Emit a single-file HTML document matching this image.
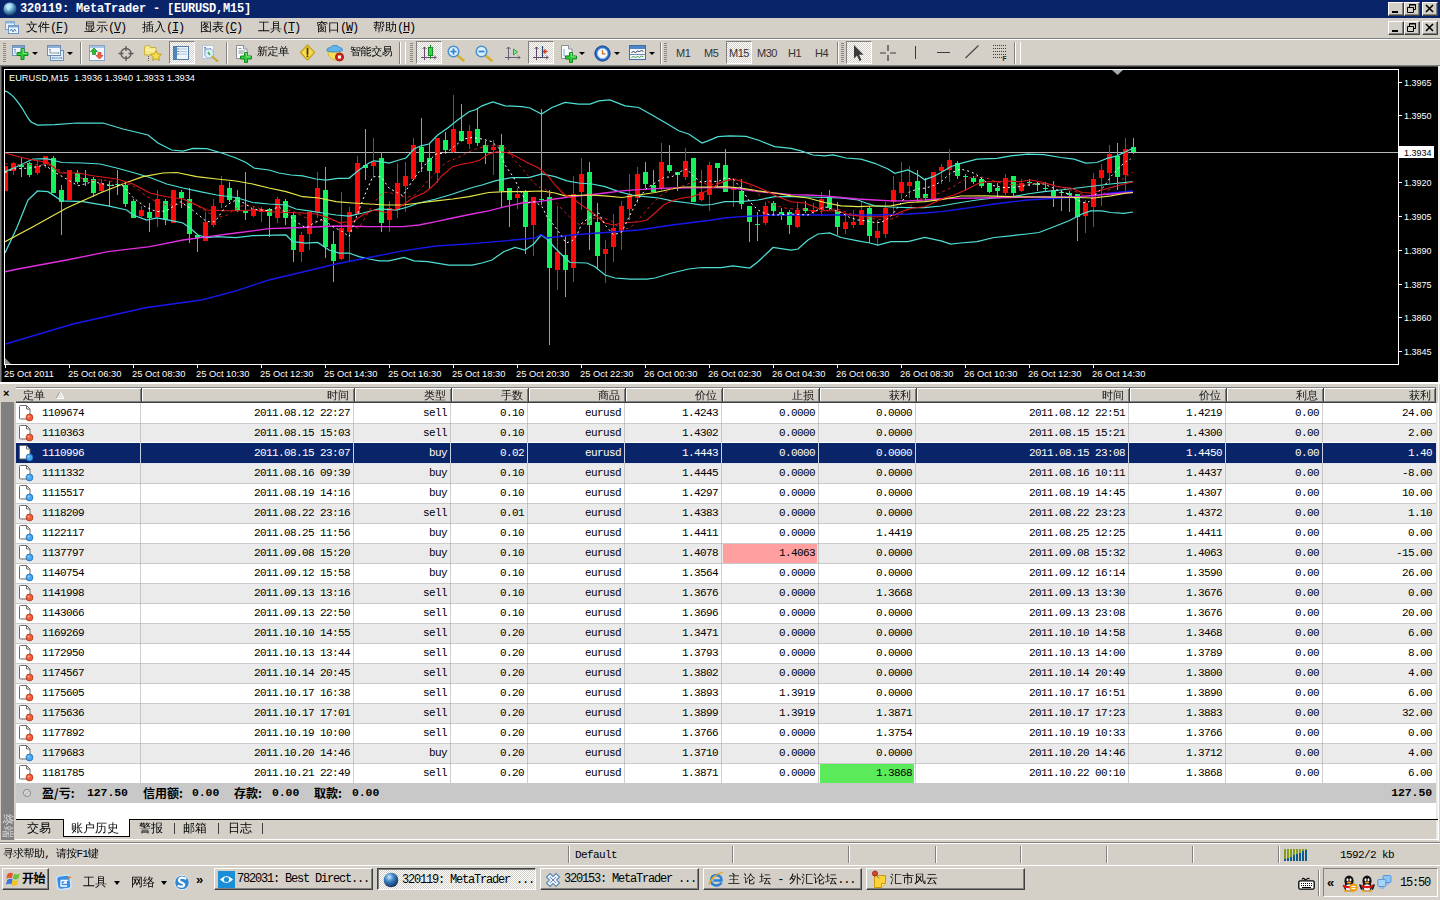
<!DOCTYPE html>
<html lang="zh"><head><meta charset="utf-8"><title>320119: MetaTrader - [EURUSD,M15]</title>
<style>
*{box-sizing:border-box;margin:0;padding:0}
html,body{width:1440px;height:900px;overflow:hidden;background:#d4d0c8}
body{position:relative;font-family:"Liberation Mono","WenQuanYi Zen Hei","Noto Sans CJK SC",monospace;font-size:12px;color:#000;line-height:1}
.a{position:absolute}
.m{font-family:"Liberation Mono","WenQuanYi Zen Hei","Noto Sans CJK SC",monospace;font-size:11px;line-height:11px;letter-spacing:-0.6px;white-space:pre}
.c{font-family:"Liberation Mono","WenQuanYi Zen Hei","Noto Sans CJK SC",monospace;font-size:12px;white-space:pre}
.s{font-family:"Liberation Sans",sans-serif;font-size:11px;white-space:pre}
#title{left:0;top:0;width:1440px;height:18px;background:#0a246a}
#title .t{left:20px;top:3px;color:#fff;font-weight:bold;font-size:12px;letter-spacing:-0.2px}
.wb{width:16px;height:14px;background:#d4d0c8;border:1px solid;border-color:#fff #404040 #404040 #fff;box-shadow:inset -1px -1px 0 #808080}
.wb svg{position:absolute;left:0;top:0}
#menu{left:0;top:18px;width:1440px;height:20px}
#menu .i{top:4px}
u{text-decoration:underline;text-underline-offset:1px}
.l{letter-spacing:-1.2px}
.grip{width:3px;height:20px;top:3px;background:repeating-linear-gradient(to bottom,#8a8780 0,#8a8780 1px,transparent 1px,transparent 2px)}
.sep{width:2px;height:22px;top:2px;border-left:1px solid #808080;border-right:1px solid #fff}
.pb{top:1px;height:23px;border:1px solid;border-color:#808080 #fff #fff #808080;background-color:#fff;background-image:linear-gradient(45deg,#d4d0c8 25%,transparent 25%,transparent 75%,#d4d0c8 75%),linear-gradient(45deg,#d4d0c8 25%,transparent 25%,transparent 75%,#d4d0c8 75%);background-size:2px 2px;background-position:0 0,1px 1px}
.ic{top:5px}
.dd{top:12px;width:0;height:0;border:3px solid transparent;border-top:3px solid #000;border-bottom:0}
.tt{font-family:"WenQuanYi Zen Hei","Noto Sans CJK SC",sans-serif;font-size:11px;letter-spacing:-0.4px;top:6px;white-space:pre}
.tf{font-family:"Liberation Sans",sans-serif;font-size:11px;top:8px;color:#333;white-space:pre;letter-spacing:-0.5px}
.hd{font-family:"WenQuanYi Zen Hei","Noto Sans CJK SC",sans-serif;font-size:11px;line-height:11px;white-space:pre;color:#111}
.row{left:16px;width:1420px;height:20px}
.row.sel{color:#fff}
.sm{font-family:"Liberation Mono","WenQuanYi Zen Hei",monospace;font-size:11.5px;line-height:12px;font-weight:bold;letter-spacing:-0.1px;white-space:pre}
.sm.k{font-family:"Noto Sans CJK SC","WenQuanYi Zen Hei",sans-serif;letter-spacing:0;font-size:12px;font-weight:700}
.tab{font-family:"WenQuanYi Zen Hei","Noto Sans CJK SC",sans-serif;font-size:12px;line-height:12px;white-space:pre}
.st{font-family:"Liberation Mono","WenQuanYi Zen Hei","Noto Sans CJK SC",monospace;font-size:11px;line-height:11px;white-space:pre;letter-spacing:-0.7px}
.sl{letter-spacing:-1px}
.sl2{font-family:"Liberation Mono",monospace;font-size:11px;line-height:11px;white-space:pre;letter-spacing:-0.6px}
.vs{top:846px;width:2px;height:17px;border-left:1px solid #808080;border-right:1px solid #fff}
.tbn{background:#d4d0c8;border:1px solid;border-color:#fff #404040 #404040 #fff;box-shadow:inset -1px -1px 0 #808080}
.tbn.on{border-color:#404040 #fff #fff #404040;box-shadow:inset 1px 1px 0 #808080;background-color:#fff;background-image:linear-gradient(45deg,#d4d0c8 25%,transparent 25%,transparent 75%,#d4d0c8 75%),linear-gradient(45deg,#d4d0c8 25%,transparent 25%,transparent 75%,#d4d0c8 75%);background-size:2px 2px;background-position:0 0,1px 1px}
.cj{font-size:12px;letter-spacing:0;font-family:"WenQuanYi Zen Hei","Noto Sans CJK SC",sans-serif}
.m12{font-size:12px;line-height:12px;letter-spacing:-1.2px}

</style></head>
<body>
<!-- TITLE BAR -->
<div id="title" class="a">
 <svg class="a" style="left:2px;top:1px" width="16" height="16" viewBox="0 0 16 16"><defs><radialGradient id="gl" cx="0.4" cy="0.3" r="0.7"><stop offset="0" stop-color="#d8f4ff"/><stop offset="0.45" stop-color="#6fb4d8"/><stop offset="1" stop-color="#123a6a"/></radialGradient></defs><circle cx="8" cy="8" r="6.6" fill="url(#gl)"/><path d="M4 5q2-3 5-2q2 2 0 4q-2 1-2 3q-3-1-3-5z" fill="#bfeaf8" opacity=".7"/></svg>
 <div class="a c t">320119: MetaTrader - [EURUSD,M15]</div>
 <div class="a wb" style="left:1388px;top:2px"><svg width="14" height="12"><rect x="3" y="8" width="6" height="2" fill="#000"/></svg></div>
 <div class="a wb" style="left:1404px;top:2px"><svg width="14" height="12"><path d="M4.5 1.5h6v5h-6zM4 2h7M2.500 4.500h6v5h-6zM2 5h7" fill="none" stroke="#000" stroke-width="1"/><rect x="3" y="5" width="5" height="4" fill="#d4d0c8"/></svg></div>
 <div class="a wb" style="left:1422px;top:2px"><svg width="14" height="12"><path d="M3 2l7 7M10 2l-7 7" stroke="#000" stroke-width="1.6"/></svg></div>
</div>
<!-- MENU BAR -->
<div id="menu" class="a">
 <svg class="a" style="left:4px;top:2px" width="16" height="16" viewBox="0 0 16 16"><rect x="1.500" y="1.500" width="9" height="8" fill="#eaf3fc" stroke="#7ea4cf"/><rect x="1.500" y="1.500" width="9" height="2" fill="#8fb3dd"/><rect x="4.500" y="5.500" width="10" height="8" fill="#f4f9ff" stroke="#6a94c6"/><rect x="4.500" y="5.500" width="10" height="2" fill="#7aa4d6"/><path d="M6 11l1.500-2l1.500 3l1.500-3l1.500 2.500" fill="none" stroke="#3d6fb0" stroke-width=".9"/></svg>
 <div class="a c i" style="left:26px">文件<span class="l">(<u>F</u>)</span></div>
 <div class="a c i" style="left:84px">显示<span class="l">(<u>V</u>)</span></div>
 <div class="a c i" style="left:142px">插入<span class="l">(<u>I</u>)</span></div>
 <div class="a c i" style="left:200px">图表<span class="l">(<u>C</u>)</span></div>
 <div class="a c i" style="left:258px">工具<span class="l">(<u>T</u>)</span></div>
 <div class="a c i" style="left:316px">窗口<span class="l">(<u>W</u>)</span></div>
 <div class="a c i" style="left:373px">帮助<span class="l">(<u>H</u>)</span></div>
 <div class="a wb" style="left:1388px;top:3px"><svg width="14" height="12"><rect x="3" y="8" width="6" height="2" fill="#000"/></svg></div>
 <div class="a wb" style="left:1404px;top:3px"><svg width="14" height="12"><path d="M4.500 1.500h6v5h-6zM4 2h7M2.500 4.500h6v5h-6zM2 5h7" fill="none" stroke="#000" stroke-width="1"/><rect x="3" y="5" width="5" height="4" fill="#d4d0c8"/></svg></div>
 <div class="a wb" style="left:1422px;top:3px"><svg width="14" height="12"><path d="M3 2l7 7M10 2l-7 7" stroke="#000" stroke-width="1.6"/></svg></div>
</div>
<div class="a" style="left:0;top:38px;width:1440px;height:1px;background:#808080"></div>
<div class="a" style="left:0;top:39px;width:1440px;height:1px;background:#fff"></div>
<!-- TOOLBAR -->
<div id="tb" class="a" style="left:0;top:40px;width:1440px;height:26px">
 <div class="a grip" style="left:3px"></div>
 <svg class="a ic" style="left:12px" width="18" height="16" viewBox="0 0 18 16"><rect x=".5" y=".5" width="12" height="10" fill="#eef5fd" stroke="#6d8fb5"/><rect x="1" y="1" width="11" height="2" fill="#7b9fc9"/><path d="M3 4v5M2 5l1-1l1 1" stroke="#7b9fc9" fill="none"/><path d="M9 3.500h3v4h4v3h-4v4h-3v-4h-4v-3h4z" fill="#2fcb3a" stroke="#118a1c"/><path d="M9.700 4.300h1.600v4h4" stroke="#9cf0a0" fill="none" stroke-width=".8"/></svg>
 <div class="a dd" style="left:32px"></div>
 <svg class="a ic" style="left:47px" width="18" height="16" viewBox="0 0 18 16"><rect x="3.500" y="5.500" width="13" height="10" fill="#ddeaf8" stroke="#6d8fb5"/><rect x=".5" y=".5" width="13" height="10" fill="#f2f7fd" stroke="#6d8fb5"/><rect x="1" y="1" width="12" height="2" fill="#8fb0d6"/><path d="M3 4v4M2 5l1-1l1 1M3 8h9M11 7l1 1l-1 1" stroke="#8a9bb0" fill="none"/><path d="M5 13h10M6 12l-1 1l1 1M14 12l1 1l-1 1" stroke="#7b9fc9" fill="none"/></svg>
 <div class="a dd" style="left:67px"></div>
 <div class="a sep" style="left:80px"></div>
 <svg class="a ic" style="left:89px" width="16" height="16" viewBox="0 0 16 16"><rect x=".5" y=".5" width="15" height="15" fill="#f4f8fd" stroke="#7fa3cc"/><rect x="1" y="1" width="14" height="2" fill="#a9c4e3"/><path d="M5 3l3.500 3.500h-2v3h-3v-3h-2z" fill="#2dbb38" stroke="#128a1d" stroke-width=".7"/><path d="M10.500 14l3.500-3.500h-2v-3h-3v3h-2z" fill="#f0604a" stroke="#c23522" stroke-width=".7"/></svg>
 <svg class="a ic" style="left:118px" width="16" height="16" viewBox="0 0 16 16"><circle cx="8" cy="8.500" r="5" fill="none" stroke="#5a5a5a" stroke-width="1.300"/><path d="M8 1v5M8 11v5M.5 8.500h5M10.500 8.500h5" stroke="#5a5a5a" stroke-width="1.300"/></svg>
 <svg class="a ic" style="left:144px" width="18" height="16" viewBox="0 0 18 16"><path d="M.5 3q0-2.500 2-2.500h2q2 0 2 2h5.500v7.500h-11.500z" fill="#f7e787" stroke="#c9b13f"/><path d="M1 5h11" stroke="#fff6b8"/><path d="M12 5.500l1.700 3.300l3.700.5l-2.700 2.600l.7 3.600l-3.400-1.800l-3.300 1.800l.6-3.600l-2.700-2.600l3.700-.5z" fill="#f5de4a" stroke="#b89a1c" stroke-width=".9"/><path d="M4.500 11v5" stroke="#6b5a2a" stroke-dasharray="1 1"/></svg>
 <div class="a pb" style="left:169px;width:26px"></div>
 <svg class="a ic" style="left:173px;top:6px" width="16" height="14" viewBox="0 0 16 14"><rect x=".5" y=".5" width="15" height="13" fill="#eef5fd" stroke="#4f7cab"/><rect x="1" y="1" width="3" height="12" fill="#4f86bd"/><path d="M6 3h8M6 5.500h8M6 8h8" stroke="#a9c4e3"/><path d="M4.500 2.500h1v1h-1zM4.500 5h1v1h-1zM4.500 7.500h1v1h-1z" fill="#123" /></svg>
 <svg class="a ic" style="left:201px" width="18" height="17" viewBox="0 0 18 17"><rect x="1.500" y=".5" width="11" height="13" fill="#f5f8fc" stroke="#b9c7d8"/><path d="M4 2v8M3 3l1-1l1 1M4 4h6M9 3l1 1l-1 1" stroke="#6d8fb5" fill="none"/><circle cx="8" cy="8.500" r="4.500" fill="#d5ecf7" fill-opacity=".75" stroke="#9ab9d6" stroke-width="1.200"/><path d="M7 7l2 3" stroke="#3aa94a" stroke-width="1.500"/><path d="M11.500 12l5 4" stroke="#c8a82a" stroke-width="2.200" stroke-linecap="round"/></svg>
 <div class="a sep" style="left:226px"></div>
 <svg class="a ic" style="left:236px" width="17" height="18" viewBox="0 0 17 18"><path d="M.5.500h7l3.500 3.500v9.500h-10.500z" fill="#fbfcfd" stroke="#8a8f96"/><path d="M7.500.500v3.500h3.500" fill="#e4e8ee" stroke="#8a8f96"/><path d="M2.500 3.500h3M2.500 6h6M2.500 8h5" stroke="#8a8f96"/><path d="M8.500 7.500h3v3.500h4v3h-4v3.500h-3v-3.500h-4v-3h4z" fill="#2fcb3a" stroke="#118a1c"/><path d="M9.300 8.300h1.400v3.500h4" stroke="#9cf0a0" fill="none" stroke-width=".8"/></svg>
 <div class="a tt" style="left:257px">新定单</div>
 <svg class="a ic" style="left:299px;top:4px" width="17" height="17" viewBox="0 0 17 17"><path d="M8.500 1l7 7.500l-7 7.500l-7-7.500z" fill="#f8dc4e" stroke="#c9a21a" stroke-width="1.300" stroke-linejoin="round"/><path d="M8.500 4.500v5.500" stroke="#4a3a05" stroke-width="1.800" stroke-linecap="round"/><circle cx="8.500" cy="12.300" r="1" fill="#4a3a05"/></svg>
 <svg class="a ic" style="left:326px" width="19" height="17" viewBox="0 0 19 17"><path d="M2 6.500q-.5 5 6 8.500q6-3 6.500-8.500z" fill="#f8dd55" stroke="#d9b429"/><path d="M.7 5.500q.3-3 3.800-3q1.500-2.500 4.500-2q3-.5 4.500 2q3 0 3 3q-4 2-8 1.500q-4 .5-7.800-1.500z" fill="#63b5e8" stroke="#3d8fcc"/><circle cx="13.500" cy="12" r="4" fill="#d8281e" stroke="#a8140c"/><rect x="12" y="10.500" width="3" height="3" fill="#fff"/></svg>
 <div class="a tt" style="left:350px">智能交易</div>
 <div class="a sep" style="left:399px"></div>
 <div class="a sep" style="left:405px;border-left:0;width:1px"></div>
 <div class="a grip" style="left:410px"></div>
 <div class="a pb" style="left:416px;width:26px"></div>
 <svg class="a ic" style="left:421px" width="16" height="16" viewBox="0 0 16 16"><path d="M3.500 2v13M1.500 4l2-2l2 2M0 12.500h15M13 10.500l2 2l-2 2" stroke="#6a4a78" fill="none"/><path d="M9.500 0v14" stroke="#1a8a26"/><rect x="7.500" y="2.500" width="4" height="8" fill="#37d845" stroke="#1a8a26"/></svg>
 <svg class="a ic" style="left:447px" width="18" height="17" viewBox="0 0 18 17"><path d="M10.500 10.500l6 5" stroke="#d4b030" stroke-width="2.600" stroke-linecap="round"/><circle cx="6.500" cy="6.500" r="5.300" fill="#d9eefb" stroke="#4a8fd0" stroke-width="1.500"/><path d="M3.500 6.500h6M6.500 3.500v6" stroke="#2f7fd0" stroke-width="1.700"/></svg>
 <svg class="a ic" style="left:475px" width="18" height="17" viewBox="0 0 18 17"><path d="M10.500 10.500l6 5" stroke="#d4b030" stroke-width="2.600" stroke-linecap="round"/><circle cx="6.500" cy="6.500" r="5.300" fill="#d9eefb" stroke="#4a8fd0" stroke-width="1.500"/><path d="M3.500 6.500h6" stroke="#2f7fd0" stroke-width="1.700"/></svg>
 <svg class="a ic" style="left:505px" width="16" height="16" viewBox="0 0 16 16"><path d="M3.500 2v13M1.500 4l2-2l2 2M0 12.500h15M13 10.500l2 2l-2 2" stroke="#6a5a78" fill="none"/><path d="M8.500 4l4 3l-4 3z" fill="#8fe397" stroke="#2aa838"/></svg>
 <div class="a pb" style="left:528px;width:26px"></div>
 <svg class="a ic" style="left:533px" width="16" height="16" viewBox="0 0 16 16"><path d="M3.500 2v13M1.500 4l2-2l2 2M0 12.500h15M13 10.500l2 2l-2 2" stroke="#5a4a68" fill="none"/><path d="M9.500 1v11" stroke="#2a4a7a" stroke-width="1.200"/><path d="M14.500 6.500h-4M12.500 4.500l-2 2l2 2" stroke="#d43a1a" stroke-width="1.300" fill="none"/></svg>
 <svg class="a ic" style="left:561px" width="17" height="18" viewBox="0 0 17 18"><path d="M.5.500h7l3.500 3.500v9.500h-10.500z" fill="#fbfcfd" stroke="#8a8f96"/><path d="M7.500.500v3.500h3.500" fill="#e4e8ee" stroke="#8a8f96"/><path d="M3 4v7h5" stroke="#7fa3cc" fill="none"/><path d="M8.500 7.500h3v3.500h4v3h-4v3.500h-3v-3.500h-4v-3h4z" fill="#2fcb3a" stroke="#118a1c"/><path d="M9.300 8.300h1.400v3.500h4" stroke="#9cf0a0" fill="none" stroke-width=".8"/></svg>
 <div class="a dd" style="left:579px"></div>
 <svg class="a ic" style="left:594px" width="17" height="17" viewBox="0 0 17 17"><circle cx="8.500" cy="8.500" r="7.600" fill="#2a6cc8" stroke="#0f3f8a"/><circle cx="8.500" cy="8.500" r="5.200" fill="#f4f8fd" stroke="#8ab4e6"/><path d="M8.500 5v3.800h3" stroke="#c8701a" stroke-width="1.200" fill="none"/></svg>
 <div class="a dd" style="left:614px"></div>
 <svg class="a ic" style="left:629px" width="18" height="16" viewBox="0 0 18 16"><rect x=".5" y=".5" width="16" height="14" fill="#f4f8fd" stroke="#3f6fa8"/><rect x="1" y="1" width="15" height="3" fill="#4f86c8"/><path d="M1 9.500h15" stroke="#6d8fb5"/><path d="M2.500 7.500l2-1l2 1l2-1.500l2 .5l2-1l2 1" stroke="#224" fill="none" stroke-width=".9"/><path d="M2.500 12.500l2-1l2 1l2-1l2 1l2-1.500l2 1" stroke="#2a8a3a" fill="none" stroke-width=".9"/></svg>
 <div class="a dd" style="left:649px"></div>
 <div class="a sep" style="left:660px"></div>
 <div class="a grip" style="left:664px"></div>
 <div class="a tf" style="left:676px">M1</div>
 <div class="a tf" style="left:704px">M5</div>
 <div class="a pb" style="left:726px;width:26px"></div>
 <div class="a tf" style="left:729px">M15</div>
 <div class="a tf" style="left:757px">M30</div>
 <div class="a tf" style="left:788px">H1</div>
 <div class="a tf" style="left:815px">H4</div>
 <div class="a sep" style="left:837px"></div>
 <div class="a grip" style="left:841px"></div>
 <div class="a pb" style="left:846px;width:26px"></div>
 <svg class="a ic" style="left:853px" width="12" height="17" viewBox="0 0 12 17"><path d="M1 0v13.500l3-3l2.500 5.500l2-1l-2.500-5.300h4.500z" fill="#3a3a3a"/></svg>
 <svg class="a ic" style="left:880px" width="16" height="16" viewBox="0 0 16 16"><path d="M8 0v6M8 10v6M0 8h6M10 8h6" stroke="#3a3a3a" stroke-width="1.200"/></svg>
 <div class="a" style="left:915px;top:6px;width:1px;height:13px;background:#3a3a3a"></div>
 <div class="a" style="left:937px;top:12px;width:13px;height:1px;background:#3a3a3a"></div>
 <svg class="a ic" style="left:965px" width="14" height="14" viewBox="0 0 14 14"><path d="M.5 13l13-12.500" stroke="#4a4a4a" stroke-width="1.200"/></svg>
 <svg class="a ic" style="left:992px;top:4px" width="16" height="18" viewBox="0 0 16 18"><path d="M1 1.500h13M1 4.500h13M1 7.500h13M1 10.500h13M1 13.500h9" stroke="#3a3a3a" stroke-dasharray="1 1"/><text x="10.500" y="17" font-family="Liberation Sans,sans-serif" font-size="6.500" font-weight="bold" fill="#222">F</text></svg>
 <div class="a sep" style="left:1014px"></div>
 <div class="a sep" style="left:1020px;border-left:0;width:1px"></div>
</div>
<!-- CHART -->
<div class="a" style="left:0;top:65px;width:1440px;height:1px;background:#808080"></div>
<div class="a" style="left:0;top:66px;width:1440px;height:1px;background:#404040"></div>
<div class="a" style="left:2px;top:67px;width:1436px;height:315px;background:#000"></div><div class="a" style="left:1438px;top:66px;width:2px;height:318px;background:#f2f1ed"></div>
<div class="a" style="left:0;top:66px;width:1px;height:316px;background:#808080"></div><div class="a" style="left:1px;top:67px;width:1px;height:315px;background:#404040"></div>
<svg class="a" style="left:0;top:65px" width="1440" height="318" viewBox="0 65 1440 318">
<defs><clipPath id="cc"><rect x="5" y="70" width="1394" height="294"/></clipPath></defs>
<g clip-path="url(#cc)">
<rect x="5" y="152" width="1394" height="1" fill="#b8b8b8" shape-rendering="crispEdges"/>
<g shape-rendering="crispEdges">
<rect x="5" y="166" width="1" height="25" fill="#d8202c"/>
<rect x="3" y="166" width="5" height="25" fill="#fb0a0a"/>
<rect x="13" y="162" width="1" height="13" fill="#d8202c"/>
<rect x="11" y="163" width="5" height="8" fill="#fb0a0a"/>
<rect x="21" y="158" width="1" height="19" fill="#3ddc4c"/>
<rect x="19" y="165" width="5" height="2" fill="#12f25a"/>
<rect x="29" y="162" width="1" height="15" fill="#3ddc4c"/>
<rect x="27" y="163" width="5" height="12" fill="#12f25a"/>
<rect x="37" y="160" width="1" height="15" fill="#d8202c"/>
<rect x="35" y="166" width="5" height="7" fill="#fb0a0a"/>
<rect x="45" y="156" width="1" height="12" fill="#d8202c"/>
<rect x="43" y="156" width="5" height="8" fill="#fb0a0a"/>
<rect x="53" y="156" width="1" height="37" fill="#3ddc4c"/>
<rect x="51" y="158" width="5" height="35" fill="#12f25a"/>
<rect x="61" y="185" width="1" height="50" fill="#3ddc4c"/>
<rect x="59" y="190" width="5" height="12" fill="#12f25a"/>
<rect x="69" y="170" width="1" height="30" fill="#d8202c"/>
<rect x="67" y="170" width="5" height="30" fill="#fb0a0a"/>
<rect x="77" y="170" width="1" height="14" fill="#3ddc4c"/>
<rect x="75" y="173" width="5" height="9" fill="#12f25a"/>
<rect x="85" y="170" width="1" height="16" fill="#3ddc4c"/>
<rect x="83" y="178" width="5" height="4" fill="#12f25a"/>
<rect x="93" y="177" width="1" height="20" fill="#3ddc4c"/>
<rect x="91" y="179" width="5" height="14" fill="#12f25a"/>
<rect x="101" y="179" width="1" height="13" fill="#d8202c"/>
<rect x="99" y="183" width="5" height="8" fill="#fb0a0a"/>
<rect x="109" y="181" width="1" height="26" fill="#3ddc4c"/>
<rect x="107" y="185" width="5" height="1" fill="#12f25a"/>
<rect x="117" y="170" width="1" height="25" fill="#3ddc4c"/>
<rect x="115" y="184" width="5" height="1" fill="#12f25a"/>
<rect x="125" y="182" width="1" height="25" fill="#3ddc4c"/>
<rect x="123" y="185" width="5" height="19" fill="#12f25a"/>
<rect x="133" y="199" width="1" height="19" fill="#3ddc4c"/>
<rect x="131" y="201" width="5" height="17" fill="#12f25a"/>
<rect x="141" y="206" width="1" height="11" fill="#d8202c"/>
<rect x="139" y="210" width="5" height="6" fill="#fb0a0a"/>
<rect x="149" y="203" width="1" height="29" fill="#3ddc4c"/>
<rect x="147" y="212" width="5" height="6" fill="#12f25a"/>
<rect x="157" y="190" width="1" height="37" fill="#d8202c"/>
<rect x="155" y="199" width="5" height="18" fill="#fb0a0a"/>
<rect x="165" y="199" width="1" height="26" fill="#3ddc4c"/>
<rect x="163" y="201" width="5" height="19" fill="#12f25a"/>
<rect x="173" y="190" width="1" height="33" fill="#d8202c"/>
<rect x="171" y="190" width="5" height="33" fill="#fb0a0a"/>
<rect x="181" y="190" width="1" height="18" fill="#3ddc4c"/>
<rect x="179" y="192" width="5" height="6" fill="#12f25a"/>
<rect x="189" y="188" width="1" height="55" fill="#3ddc4c"/>
<rect x="187" y="199" width="5" height="35" fill="#12f25a"/>
<rect x="197" y="234" width="1" height="18" fill="#3ddc4c"/>
<rect x="195" y="235" width="5" height="3" fill="#12f25a"/>
<rect x="205" y="212" width="1" height="29" fill="#d8202c"/>
<rect x="203" y="222" width="5" height="19" fill="#fb0a0a"/>
<rect x="213" y="199" width="1" height="28" fill="#d8202c"/>
<rect x="211" y="206" width="5" height="19" fill="#fb0a0a"/>
<rect x="221" y="176" width="1" height="32" fill="#d8202c"/>
<rect x="219" y="185" width="5" height="18" fill="#fb0a0a"/>
<rect x="229" y="182" width="1" height="20" fill="#3ddc4c"/>
<rect x="227" y="188" width="5" height="12" fill="#12f25a"/>
<rect x="237" y="190" width="1" height="22" fill="#3ddc4c"/>
<rect x="235" y="197" width="5" height="14" fill="#12f25a"/>
<rect x="245" y="172" width="1" height="48" fill="#3ddc4c"/>
<rect x="243" y="211" width="5" height="2" fill="#12f25a"/>
<rect x="253" y="207" width="1" height="10" fill="#d8202c"/>
<rect x="251" y="209" width="5" height="7" fill="#fb0a0a"/>
<rect x="261" y="207" width="1" height="15" fill="#d8202c"/>
<rect x="259" y="209" width="5" height="3" fill="#fb0a0a"/>
<rect x="269" y="208" width="1" height="29" fill="#3ddc4c"/>
<rect x="267" y="209" width="5" height="7" fill="#12f25a"/>
<rect x="277" y="197" width="1" height="26" fill="#d8202c"/>
<rect x="275" y="199" width="5" height="19" fill="#fb0a0a"/>
<rect x="285" y="199" width="1" height="26" fill="#3ddc4c"/>
<rect x="283" y="201" width="5" height="17" fill="#12f25a"/>
<rect x="293" y="212" width="1" height="50" fill="#3ddc4c"/>
<rect x="291" y="215" width="5" height="35" fill="#12f25a"/>
<rect x="301" y="232" width="1" height="30" fill="#d8202c"/>
<rect x="299" y="235" width="5" height="17" fill="#fb0a0a"/>
<rect x="309" y="212" width="1" height="38" fill="#d8202c"/>
<rect x="307" y="212" width="5" height="22" fill="#fb0a0a"/>
<rect x="317" y="172" width="1" height="46" fill="#d8202c"/>
<rect x="315" y="188" width="5" height="24" fill="#fb0a0a"/>
<rect x="325" y="167" width="1" height="91" fill="#3ddc4c"/>
<rect x="323" y="190" width="5" height="57" fill="#12f25a"/>
<rect x="333" y="231" width="1" height="51" fill="#3ddc4c"/>
<rect x="331" y="244" width="5" height="17" fill="#12f25a"/>
<rect x="341" y="192" width="1" height="68" fill="#d8202c"/>
<rect x="339" y="228" width="5" height="31" fill="#fb0a0a"/>
<rect x="349" y="207" width="1" height="55" fill="#d8202c"/>
<rect x="347" y="212" width="5" height="20" fill="#fb0a0a"/>
<rect x="357" y="156" width="1" height="58" fill="#d8202c"/>
<rect x="355" y="163" width="5" height="51" fill="#fb0a0a"/>
<rect x="365" y="129" width="1" height="51" fill="#3ddc4c"/>
<rect x="363" y="165" width="5" height="3" fill="#12f25a"/>
<rect x="373" y="138" width="1" height="38" fill="#d8202c"/>
<rect x="371" y="162" width="5" height="4" fill="#fb0a0a"/>
<rect x="381" y="152" width="1" height="80" fill="#3ddc4c"/>
<rect x="379" y="158" width="5" height="65" fill="#12f25a"/>
<rect x="389" y="201" width="1" height="31" fill="#d8202c"/>
<rect x="387" y="208" width="5" height="12" fill="#fb0a0a"/>
<rect x="397" y="163" width="1" height="55" fill="#d8202c"/>
<rect x="395" y="183" width="5" height="27" fill="#fb0a0a"/>
<rect x="405" y="162" width="1" height="50" fill="#d8202c"/>
<rect x="403" y="176" width="5" height="10" fill="#fb0a0a"/>
<rect x="413" y="138" width="1" height="42" fill="#d8202c"/>
<rect x="411" y="145" width="5" height="34" fill="#fb0a0a"/>
<rect x="421" y="118" width="1" height="54" fill="#3ddc4c"/>
<rect x="419" y="147" width="5" height="15" fill="#12f25a"/>
<rect x="429" y="144" width="1" height="45" fill="#3ddc4c"/>
<rect x="427" y="158" width="5" height="13" fill="#12f25a"/>
<rect x="437" y="138" width="1" height="45" fill="#d8202c"/>
<rect x="435" y="138" width="5" height="35" fill="#fb0a0a"/>
<rect x="445" y="132" width="1" height="21" fill="#3ddc4c"/>
<rect x="443" y="140" width="5" height="10" fill="#12f25a"/>
<rect x="453" y="95" width="1" height="58" fill="#d8202c"/>
<rect x="451" y="129" width="5" height="23" fill="#fb0a0a"/>
<rect x="461" y="104" width="1" height="37" fill="#3ddc4c"/>
<rect x="459" y="131" width="5" height="10" fill="#12f25a"/>
<rect x="469" y="125" width="1" height="24" fill="#d8202c"/>
<rect x="467" y="131" width="5" height="13" fill="#fb0a0a"/>
<rect x="477" y="108" width="1" height="38" fill="#3ddc4c"/>
<rect x="475" y="129" width="5" height="14" fill="#12f25a"/>
<rect x="485" y="141" width="1" height="23" fill="#3ddc4c"/>
<rect x="483" y="145" width="5" height="8" fill="#12f25a"/>
<rect x="493" y="140" width="1" height="35" fill="#d8202c"/>
<rect x="491" y="147" width="5" height="3" fill="#fb0a0a"/>
<rect x="501" y="134" width="1" height="73" fill="#3ddc4c"/>
<rect x="499" y="145" width="5" height="46" fill="#12f25a"/>
<rect x="509" y="188" width="1" height="39" fill="#3ddc4c"/>
<rect x="507" y="188" width="5" height="12" fill="#12f25a"/>
<rect x="517" y="188" width="1" height="21" fill="#d8202c"/>
<rect x="515" y="194" width="5" height="4" fill="#fb0a0a"/>
<rect x="525" y="190" width="1" height="64" fill="#3ddc4c"/>
<rect x="523" y="192" width="5" height="35" fill="#12f25a"/>
<rect x="533" y="197" width="1" height="59" fill="#d8202c"/>
<rect x="531" y="197" width="5" height="28" fill="#fb0a0a"/>
<rect x="541" y="109" width="1" height="96" fill="#3ddc4c"/>
<rect x="539" y="199" width="5" height="1" fill="#12f25a"/>
<rect x="549" y="190" width="1" height="155" fill="#3ddc4c"/>
<rect x="547" y="197" width="5" height="71" fill="#12f25a"/>
<rect x="557" y="206" width="1" height="84" fill="#d8202c"/>
<rect x="555" y="252" width="5" height="18" fill="#fb0a0a"/>
<rect x="565" y="236" width="1" height="61" fill="#3ddc4c"/>
<rect x="563" y="255" width="5" height="15" fill="#12f25a"/>
<rect x="573" y="176" width="1" height="106" fill="#d8202c"/>
<rect x="571" y="194" width="5" height="74" fill="#fb0a0a"/>
<rect x="581" y="158" width="1" height="52" fill="#d8202c"/>
<rect x="579" y="174" width="5" height="18" fill="#fb0a0a"/>
<rect x="589" y="162" width="1" height="88" fill="#3ddc4c"/>
<rect x="587" y="172" width="5" height="53" fill="#12f25a"/>
<rect x="597" y="203" width="1" height="66" fill="#3ddc4c"/>
<rect x="595" y="222" width="5" height="34" fill="#12f25a"/>
<rect x="605" y="240" width="1" height="43" fill="#d8202c"/>
<rect x="603" y="249" width="5" height="5" fill="#fb0a0a"/>
<rect x="613" y="214" width="1" height="48" fill="#d8202c"/>
<rect x="611" y="228" width="5" height="19" fill="#fb0a0a"/>
<rect x="621" y="201" width="1" height="49" fill="#d8202c"/>
<rect x="619" y="206" width="5" height="25" fill="#fb0a0a"/>
<rect x="629" y="174" width="1" height="46" fill="#d8202c"/>
<rect x="627" y="194" width="5" height="15" fill="#fb0a0a"/>
<rect x="637" y="167" width="1" height="36" fill="#d8202c"/>
<rect x="635" y="174" width="5" height="24" fill="#fb0a0a"/>
<rect x="645" y="162" width="1" height="26" fill="#3ddc4c"/>
<rect x="643" y="172" width="5" height="12" fill="#12f25a"/>
<rect x="653" y="170" width="1" height="22" fill="#3ddc4c"/>
<rect x="651" y="185" width="5" height="7" fill="#12f25a"/>
<rect x="661" y="143" width="1" height="47" fill="#d8202c"/>
<rect x="659" y="162" width="5" height="27" fill="#fb0a0a"/>
<rect x="669" y="145" width="1" height="28" fill="#3ddc4c"/>
<rect x="667" y="165" width="5" height="6" fill="#12f25a"/>
<rect x="677" y="172" width="1" height="19" fill="#3ddc4c"/>
<rect x="675" y="172" width="5" height="3" fill="#12f25a"/>
<rect x="685" y="148" width="1" height="32" fill="#d8202c"/>
<rect x="683" y="161" width="5" height="16" fill="#fb0a0a"/>
<rect x="693" y="158" width="1" height="44" fill="#3ddc4c"/>
<rect x="691" y="158" width="5" height="44" fill="#12f25a"/>
<rect x="701" y="170" width="1" height="31" fill="#d8202c"/>
<rect x="699" y="192" width="5" height="8" fill="#fb0a0a"/>
<rect x="709" y="162" width="1" height="49" fill="#d8202c"/>
<rect x="707" y="165" width="5" height="30" fill="#fb0a0a"/>
<rect x="717" y="163" width="1" height="24" fill="#3ddc4c"/>
<rect x="715" y="163" width="5" height="5" fill="#12f25a"/>
<rect x="725" y="149" width="1" height="43" fill="#3ddc4c"/>
<rect x="723" y="165" width="5" height="27" fill="#12f25a"/>
<rect x="733" y="178" width="1" height="29" fill="#d8202c"/>
<rect x="731" y="188" width="5" height="2" fill="#fb0a0a"/>
<rect x="741" y="179" width="1" height="30" fill="#3ddc4c"/>
<rect x="739" y="191" width="5" height="13" fill="#12f25a"/>
<rect x="749" y="206" width="1" height="36" fill="#3ddc4c"/>
<rect x="747" y="206" width="5" height="16" fill="#12f25a"/>
<rect x="757" y="212" width="1" height="29" fill="#3ddc4c"/>
<rect x="755" y="224" width="5" height="1" fill="#12f25a"/>
<rect x="765" y="202" width="1" height="23" fill="#d8202c"/>
<rect x="763" y="206" width="5" height="17" fill="#fb0a0a"/>
<rect x="773" y="201" width="1" height="15" fill="#3ddc4c"/>
<rect x="771" y="203" width="5" height="8" fill="#12f25a"/>
<rect x="781" y="208" width="1" height="12" fill="#3ddc4c"/>
<rect x="779" y="212" width="5" height="3" fill="#12f25a"/>
<rect x="789" y="210" width="1" height="24" fill="#3ddc4c"/>
<rect x="787" y="212" width="5" height="13" fill="#12f25a"/>
<rect x="797" y="203" width="1" height="25" fill="#d8202c"/>
<rect x="795" y="210" width="5" height="17" fill="#fb0a0a"/>
<rect x="805" y="201" width="1" height="12" fill="#3ddc4c"/>
<rect x="803" y="208" width="5" height="3" fill="#12f25a"/>
<rect x="813" y="203" width="1" height="11" fill="#d8202c"/>
<rect x="811" y="210" width="5" height="2" fill="#fb0a0a"/>
<rect x="821" y="192" width="1" height="24" fill="#d8202c"/>
<rect x="819" y="199" width="5" height="11" fill="#fb0a0a"/>
<rect x="829" y="190" width="1" height="20" fill="#3ddc4c"/>
<rect x="827" y="197" width="5" height="11" fill="#12f25a"/>
<rect x="837" y="202" width="1" height="33" fill="#3ddc4c"/>
<rect x="835" y="211" width="5" height="16" fill="#12f25a"/>
<rect x="845" y="213" width="1" height="21" fill="#d8202c"/>
<rect x="843" y="222" width="5" height="7" fill="#fb0a0a"/>
<rect x="853" y="210" width="1" height="18" fill="#d8202c"/>
<rect x="851" y="222" width="5" height="3" fill="#fb0a0a"/>
<rect x="861" y="202" width="1" height="23" fill="#d8202c"/>
<rect x="859" y="210" width="5" height="15" fill="#fb0a0a"/>
<rect x="869" y="206" width="1" height="37" fill="#3ddc4c"/>
<rect x="867" y="208" width="5" height="28" fill="#12f25a"/>
<rect x="877" y="220" width="1" height="26" fill="#d8202c"/>
<rect x="875" y="231" width="5" height="7" fill="#fb0a0a"/>
<rect x="885" y="202" width="1" height="36" fill="#d8202c"/>
<rect x="883" y="208" width="5" height="26" fill="#fb0a0a"/>
<rect x="893" y="176" width="1" height="40" fill="#d8202c"/>
<rect x="891" y="190" width="5" height="12" fill="#fb0a0a"/>
<rect x="901" y="162" width="1" height="37" fill="#d8202c"/>
<rect x="899" y="182" width="5" height="11" fill="#fb0a0a"/>
<rect x="909" y="166" width="1" height="32" fill="#d8202c"/>
<rect x="907" y="182" width="5" height="4" fill="#fb0a0a"/>
<rect x="917" y="170" width="1" height="32" fill="#3ddc4c"/>
<rect x="915" y="181" width="5" height="17" fill="#12f25a"/>
<rect x="925" y="178" width="1" height="22" fill="#3ddc4c"/>
<rect x="923" y="194" width="5" height="4" fill="#12f25a"/>
<rect x="933" y="172" width="1" height="29" fill="#d8202c"/>
<rect x="931" y="172" width="5" height="28" fill="#fb0a0a"/>
<rect x="941" y="164" width="1" height="20" fill="#d8202c"/>
<rect x="939" y="167" width="5" height="4" fill="#fb0a0a"/>
<rect x="949" y="149" width="1" height="33" fill="#d8202c"/>
<rect x="947" y="160" width="5" height="10" fill="#fb0a0a"/>
<rect x="957" y="161" width="1" height="18" fill="#3ddc4c"/>
<rect x="955" y="163" width="5" height="13" fill="#12f25a"/>
<rect x="965" y="174" width="1" height="16" fill="#3ddc4c"/>
<rect x="963" y="176" width="5" height="1" fill="#12f25a"/>
<rect x="973" y="176" width="1" height="8" fill="#3ddc4c"/>
<rect x="971" y="178" width="5" height="4" fill="#12f25a"/>
<rect x="981" y="177" width="1" height="11" fill="#3ddc4c"/>
<rect x="979" y="179" width="5" height="7" fill="#12f25a"/>
<rect x="989" y="183" width="1" height="10" fill="#3ddc4c"/>
<rect x="987" y="183" width="5" height="9" fill="#12f25a"/>
<rect x="997" y="183" width="1" height="15" fill="#3ddc4c"/>
<rect x="995" y="188" width="5" height="3" fill="#12f25a"/>
<rect x="1005" y="174" width="1" height="21" fill="#d8202c"/>
<rect x="1003" y="178" width="5" height="15" fill="#fb0a0a"/>
<rect x="1013" y="176" width="1" height="20" fill="#3ddc4c"/>
<rect x="1011" y="176" width="5" height="17" fill="#12f25a"/>
<rect x="1021" y="179" width="1" height="13" fill="#d8202c"/>
<rect x="1019" y="183" width="5" height="8" fill="#fb0a0a"/>
<rect x="1029" y="179" width="1" height="7" fill="#3ddc4c"/>
<rect x="1027" y="182" width="5" height="1" fill="#12f25a"/>
<rect x="1037" y="182" width="1" height="9" fill="#3ddc4c"/>
<rect x="1035" y="183" width="5" height="2" fill="#12f25a"/>
<rect x="1045" y="182" width="1" height="9" fill="#3ddc4c"/>
<rect x="1043" y="188" width="5" height="1" fill="#12f25a"/>
<rect x="1053" y="181" width="1" height="26" fill="#3ddc4c"/>
<rect x="1051" y="190" width="5" height="7" fill="#12f25a"/>
<rect x="1061" y="190" width="1" height="21" fill="#3ddc4c"/>
<rect x="1059" y="192" width="5" height="1" fill="#12f25a"/>
<rect x="1069" y="191" width="1" height="21" fill="#3ddc4c"/>
<rect x="1067" y="193" width="5" height="2" fill="#12f25a"/>
<rect x="1077" y="194" width="1" height="47" fill="#3ddc4c"/>
<rect x="1075" y="194" width="5" height="23" fill="#12f25a"/>
<rect x="1085" y="200" width="1" height="33" fill="#d8202c"/>
<rect x="1083" y="203" width="5" height="13" fill="#fb0a0a"/>
<rect x="1093" y="173" width="1" height="54" fill="#d8202c"/>
<rect x="1091" y="179" width="5" height="28" fill="#fb0a0a"/>
<rect x="1101" y="164" width="1" height="42" fill="#d8202c"/>
<rect x="1099" y="170" width="5" height="8" fill="#fb0a0a"/>
<rect x="1109" y="145" width="1" height="39" fill="#d8202c"/>
<rect x="1107" y="154" width="5" height="19" fill="#fb0a0a"/>
<rect x="1117" y="143" width="1" height="47" fill="#3ddc4c"/>
<rect x="1115" y="156" width="5" height="21" fill="#12f25a"/>
<rect x="1125" y="138" width="1" height="55" fill="#d8202c"/>
<rect x="1123" y="149" width="5" height="26" fill="#fb0a0a"/>
<rect x="1133" y="138" width="1" height="16" fill="#3ddc4c"/>
<rect x="1131" y="147" width="5" height="5" fill="#12f25a"/>
</g>
<path d="M4.0 90.5 L8.0 92.3 L11.0 94.4 L14.0 97.3 L16.7 100.6 L19.5 104.3 L22.2 108.3 L25.0 113.0 L28.3 118.5 L31.0 122.0 L37.5 125.0 L55.0 124.7 L76.7 123.0 L103.0 123.0 L123.0 129.0 L148.0 135.0 L158.0 143.0 L171.7 150.0 L183.0 151.0 L193.0 148.3 L206.7 148.7 L221.7 153.0 L236.0 158.0 L246.0 162.5 L254.0 168.0 L269.0 170.0 L279.0 173.0 L291.0 175.0 L302.7 175.8 L316.0 179.0 L326.0 180.0 L337.7 178.3 L349.0 178.3 L359.0 170.0 L369.0 163.0 L374.0 160.8 L381.0 161.7 L389.0 163.0 L399.0 160.0 L406.0 158.0 L414.0 149.0 L421.0 145.8 L429.0 144.0 L437.7 135.0 L447.7 128.0 L457.7 120.0 L469.0 111.7 L476.0 109.5 L482.0 105.8 L492.8 102.0 L505.0 105.8 L522.0 106.7 L530.0 108.0 L541.5 114.0 L552.0 107.5 L565.0 102.5 L578.7 104.0 L590.0 104.0 L598.7 100.8 L610.0 100.0 L625.0 105.8 L638.7 107.5 L652.0 115.0 L665.0 122.5 L678.7 130.8 L688.7 134.0 L702.0 143.0 L708.0 140.8 L718.0 136.7 L729.7 136.0 L746.0 136.3 L758.0 140.0 L774.7 146.7 L791.0 148.3 L801.0 150.8 L813.0 155.0 L824.7 155.8 L833.0 155.0 L846.0 158.0 L861.0 159.2 L874.7 163.3 L888.0 169.0 L894.7 173.3 L908.0 170.0 L918.0 175.0 L924.7 179.7 L933.0 176.7 L941.0 172.5 L950.7 166.7 L960.7 163.3 L977.0 159.2 L997.0 158.3 L1010.7 155.8 L1027.0 154.2 L1044.0 154.7 L1060.7 157.5 L1074.0 159.2 L1085.7 163.0 L1097.0 162.5 L1107.0 158.3 L1117.0 155.8 L1125.7 151.7 L1133.0 148.3" fill="none" stroke="#4fe0d6" stroke-width="1.25"/>
<path d="M5.0 171.7 L16.7 166.7 L33.0 159.0 L46.7 158.7 L61.7 162.5 L83.0 163.0 L100.0 164.0 L116.7 168.0 L133.0 172.5 L150.0 177.5 L166.7 184.0 L183.0 188.0 L200.0 191.7 L216.7 195.0 L236.0 197.5 L252.7 202.5 L269.0 204.0 L286.0 205.0 L296.0 209.0 L309.0 210.8 L322.7 213.0 L336.0 215.0 L349.0 216.0 L362.7 213.0 L379.0 209.0 L396.0 210.0 L406.0 207.5 L419.0 203.0 L436.0 199.0 L452.7 194.0 L469.0 188.5 L476.0 186.5 L482.0 185.0 L495.0 180.8 L512.0 177.5 L528.7 177.5 L542.0 174.0 L555.0 176.7 L567.0 180.8 L578.7 183.0 L592.0 184.0 L605.0 186.7 L618.7 191.7 L632.0 195.0 L645.0 196.7 L658.7 198.0 L672.0 200.8 L688.7 203.0 L702.0 205.0 L712.0 204.5 L724.7 201.7 L741.0 201.7 L758.0 200.0 L774.7 196.7 L791.0 196.7 L808.0 197.0 L824.7 197.5 L841.0 198.0 L858.0 200.0 L866.0 203.0 L874.7 205.8 L891.0 207.0 L908.0 207.5 L924.7 207.5 L941.0 206.0 L960.7 202.5 L977.0 200.0 L994.0 198.0 L1010.7 197.0 L1027.0 194.0 L1044.0 191.7 L1060.7 190.0 L1077.0 188.0 L1094.0 186.0 L1110.7 184.0 L1133.0 181.7" fill="none" stroke="#4fe0d6" stroke-width="1.25"/>
<path d="M5.0 253.0 L16.7 228.0 L28.0 200.0 L37.5 191.0 L48.0 191.7 L61.7 200.8 L83.0 201.7 L108.0 205.8 L126.7 210.0 L133.0 215.0 L146.7 220.0 L156.7 218.0 L173.0 220.8 L183.0 223.0 L190.0 228.0 L198.0 235.0 L206.7 237.5 L216.7 236.7 L236.0 237.7 L252.7 235.6 L286.0 235.0 L292.7 241.7 L306.0 243.0 L317.7 242.5 L329.0 250.0 L339.0 253.0 L349.0 253.0 L359.0 256.7 L369.0 259.0 L379.0 260.8 L389.0 260.8 L404.0 257.5 L414.0 260.8 L427.7 261.7 L449.0 265.0 L472.0 265.0 L482.0 263.0 L492.0 260.0 L503.7 251.7 L515.0 247.5 L525.0 250.0 L533.7 244.0 L541.0 235.0 L547.0 239.0 L555.0 248.0 L562.0 255.0 L570.0 262.5 L587.0 263.0 L595.0 266.7 L605.0 275.0 L615.0 278.0 L630.0 279.0 L647.0 279.0 L655.0 278.0 L672.0 273.0 L688.7 269.0 L702.0 267.5 L721.0 267.5 L733.0 266.0 L749.7 268.0 L758.0 261.7 L773.0 247.5 L791.0 250.0 L798.0 249.0 L808.0 240.0 L818.0 234.0 L829.7 233.0 L841.0 237.5 L858.0 240.8 L869.7 243.0 L878.0 245.0 L891.0 241.7 L908.0 241.7 L924.7 237.5 L941.0 240.8 L950.7 244.0 L960.7 243.0 L977.0 241.7 L994.0 237.5 L1010.7 235.8 L1027.0 234.0 L1039.0 232.5 L1052.0 227.5 L1069.0 220.8 L1082.0 214.0 L1090.7 210.8 L1102.0 210.8 L1110.7 212.5 L1124.0 213.3 L1133.0 212.0" fill="none" stroke="#4fe0d6" stroke-width="1.25"/>
<path d="M5.5 344.0 L73.0 324.0 L146.7 307.5 L201.7 300.0 L236.0 290.8 L269.0 280.0 L302.7 272.0 L336.0 264.0 L369.0 257.5 L402.7 250.8 L436.0 246.0 L472.0 243.7 L505.0 240.8 L535.0 238.0 L541.0 234.5 L547.0 238.0 L572.0 235.0 L605.0 232.5 L638.7 230.0 L672.0 225.0 L712.0 220.0 L724.7 218.0 L741.0 216.7 L774.7 215.0 L808.0 215.0 L841.0 215.0 L874.7 215.0 L908.0 214.0 L924.7 213.0 L941.0 211.7 L960.7 209.0 L977.0 206.7 L994.0 204.0 L1010.7 202.0 L1027.0 200.0 L1044.0 199.0 L1060.7 198.0 L1077.0 197.0 L1094.0 195.8 L1110.7 193.0 L1133.0 191.0" fill="none" stroke="#1818ee" stroke-width="1.35"/>
<path d="M3.7 272.0 L18.0 269.0 L66.7 260.0 L108.0 251.7 L150.0 246.7 L183.0 240.0 L208.0 236.7 L236.0 233.0 L252.7 230.8 L269.0 228.7 L302.7 227.5 L336.0 226.0 L369.0 226.7 L402.7 226.7 L419.0 225.0 L436.0 221.7 L452.7 218.0 L472.0 214.0 L488.7 210.8 L505.0 206.7 L522.0 203.0 L538.7 201.7 L555.0 199.0 L572.0 196.7 L588.7 195.0 L605.0 193.0 L622.0 190.8 L638.7 189.7 L655.0 188.7 L672.0 188.0 L712.0 187.7 L733.0 188.0 L758.0 191.7 L774.7 193.0 L791.0 194.7 L808.0 195.0 L824.7 195.8 L841.0 197.5 L858.0 199.0 L874.7 200.0 L891.0 200.8 L908.0 200.8 L924.7 200.0 L941.0 198.7 L977.0 198.0 L1010.7 197.5 L1044.0 197.0 L1077.0 196.7 L1110.7 194.0 L1133.0 192.5" fill="none" stroke="#e22ee2" stroke-width="1.3"/>
<path d="M5.0 241.7 L33.0 226.7 L66.7 208.0 L100.0 193.0 L126.7 182.5 L143.0 176.7 L163.0 173.0 L176.7 172.5 L196.7 176.7 L216.7 179.0 L236.0 181.0 L252.7 184.0 L269.0 188.0 L286.0 191.7 L302.7 196.7 L319.0 198.0 L336.0 201.7 L352.7 203.0 L369.0 204.0 L386.0 205.0 L402.7 205.0 L419.0 203.0 L436.0 200.8 L452.7 199.0 L469.0 196.7 L488.7 192.5 L505.0 191.7 L522.0 191.7 L542.0 191.0 L555.0 193.0 L565.0 195.8 L588.7 195.0 L605.0 195.8 L622.0 197.5 L638.7 195.0 L655.0 192.5 L672.0 189.0 L682.0 187.0 L712.0 187.0 L724.7 186.7 L741.0 188.0 L758.0 190.8 L774.7 193.0 L791.0 195.8 L808.0 198.0 L824.7 202.5 L841.0 205.8 L858.0 206.7 L874.7 206.0 L891.0 205.8 L908.0 202.5 L924.7 201.7 L941.0 199.7 L960.7 196.0 L985.7 195.8 L1010.7 196.7 L1044.0 197.0 L1077.0 197.5 L1094.0 198.0 L1110.7 195.8 L1127.0 193.0 L1133.0 192.5" fill="none" stroke="#e8e84a" stroke-width="1.2"/>
<path d="M5.0 153.0 L21.7 157.5 L33.0 160.0 L48.0 162.5 L60.0 173.0 L78.0 173.0 L93.0 175.8 L116.7 179.0 L133.0 184.0 L150.0 193.0 L166.7 196.7 L183.0 199.0 L196.7 205.0 L206.7 210.0 L223.0 210.8 L236.0 210.8 L252.7 210.0 L269.0 211.7 L286.0 212.5 L302.7 213.0 L316.0 214.0 L329.0 218.0 L339.0 222.5 L352.7 221.7 L362.7 215.0 L374.0 210.0 L386.0 212.5 L396.0 209.0 L402.7 205.0 L412.7 198.0 L424.0 193.0 L434.0 185.0 L442.7 175.0 L452.7 166.7 L462.7 164.0 L472.0 162.5 L480.0 160.0 L488.7 154.0 L497.0 151.7 L507.0 152.5 L515.0 155.8 L527.0 162.5 L538.7 168.0 L547.0 175.0 L555.0 185.0 L563.7 194.0 L572.0 198.0 L578.7 203.0 L588.7 210.0 L598.7 218.0 L605.0 223.0 L613.7 225.0 L622.0 223.0 L638.7 221.7 L647.0 220.0 L655.0 213.0 L663.7 205.0 L672.0 200.8 L682.0 198.0 L692.0 196.7 L702.0 193.0 L710.0 189.5 L718.0 184.0 L726.0 180.5 L733.0 179.0 L749.7 184.0 L766.0 190.8 L778.0 196.7 L791.0 201.7 L804.7 203.0 L816.0 207.5 L824.7 210.8 L838.0 211.0 L849.7 215.0 L866.0 216.7 L883.0 216.7 L894.7 215.0 L901.0 211.7 L913.0 208.0 L924.7 206.7 L936.0 201.7 L944.0 198.0 L954.0 195.0 L965.7 190.0 L977.0 184.0 L985.7 181.7 L994.0 181.7 L1007.0 181.0 L1019.0 181.7 L1030.7 180.0 L1044.0 182.5 L1057.0 186.7 L1070.7 188.0 L1082.0 192.5 L1090.7 193.0 L1102.0 190.0 L1114.0 186.7 L1124.0 184.0 L1133.0 181.7" fill="none" stroke="#e01818" stroke-width="1.1"/>
<path d="M5.0 163.7 L11.0 164.5 L17.0 164.7 L23.0 164.0 L29.0 164.4 L35.0 164.7 L41.0 164.9 L47.0 164.7 L53.0 166.1 L59.0 169.9 L65.0 172.7 L71.0 174.6 L77.0 176.4 L83.0 178.8 L89.0 180.8 L95.0 180.4 L101.0 179.8 L107.0 180.4 L113.0 181.5 L119.0 182.6 L125.0 183.7 L131.0 184.7 L137.0 188.5 L143.0 193.8 L149.0 197.8 L155.0 201.0 L161.0 203.0 L167.0 205.0 L173.0 205.0 L179.0 204.4 L185.0 202.8 L191.0 202.4 L197.0 205.7 L203.0 209.4 L209.0 213.0 L215.0 215.9 L221.0 216.8 L227.0 215.2 L233.0 210.5 L239.0 206.9 L245.0 205.0 L251.0 205.6 L257.0 207.5 L263.0 210.0 L269.0 210.6 L275.0 211.1 L281.0 211.0 L287.0 209.8 L293.0 211.4 L299.0 214.4 L305.0 217.4 L311.0 219.8 L317.0 221.5 L323.0 220.3 L329.0 219.5 L335.0 220.7 L341.0 224.0 L347.0 225.8 L353.0 227.2 L359.0 228.1 L365.0 217.7 L371.0 207.7 L377.0 199.2 L383.0 192.5 L389.0 192.3 L395.0 194.5 L401.0 196.7 L407.0 196.8 L413.0 196.5 L419.0 190.2 L425.0 184.0 L431.0 177.5 L437.0 171.1 L443.0 164.9 L449.0 160.9 L455.0 158.9 L461.0 156.0 L467.0 152.8 L473.0 149.8 L479.0 148.1 L485.0 146.3 L491.0 145.4 L497.0 145.5 L503.0 146.9 L509.0 150.8 L515.0 160.9 L521.0 167.1 L527.0 174.4 L533.0 182.0 L539.0 187.2 L545.0 188.9 L551.0 194.3 L557.0 203.4 L563.0 210.3 L569.0 216.3 L575.0 222.9 L581.0 224.8 L587.0 223.2 L593.0 218.3 L599.0 218.0 L605.0 218.5 L611.0 220.5 L617.0 225.9 L623.0 229.1 L629.0 228.2 L635.0 223.9 L641.0 216.7 L647.0 209.7 L653.0 202.7 L659.0 196.9 L665.0 192.6 L671.0 189.2 L677.0 187.2 L683.0 185.9 L689.0 183.5 L695.0 181.4 L701.0 182.5 L707.0 184.3 L713.0 184.6 L719.0 182.1 L725.0 181.2 L731.0 179.8 L737.0 179.1 L743.0 180.3 L749.0 184.9 L755.0 190.7 L761.0 196.6 L767.0 201.0 L773.0 204.3 L779.0 206.6 L785.0 208.0 L791.0 208.8 L797.0 208.9 L803.0 209.0 L809.0 210.1 L815.0 211.3 L821.0 211.6 L827.0 210.6 L833.0 209.0 L839.0 209.6 L845.0 211.6 L851.0 213.7 L857.0 215.9 L863.0 217.5 L869.0 218.6 L875.0 218.9 L881.0 219.5 L887.0 219.6 L893.0 218.6 L899.0 215.6 L905.0 210.9 L911.0 205.4 L917.0 200.7 L923.0 197.9 L929.0 196.0 L935.0 194.4 L941.0 192.3 L947.0 189.8 L953.0 186.8 L959.0 182.8 L965.0 179.8 L971.0 177.2 L977.0 176.7 L983.0 177.2 L989.0 178.9 L995.0 181.4 L1001.0 183.0 L1007.0 184.0 L1013.0 184.7 L1019.0 184.9 L1025.0 184.4 L1031.0 183.5 L1037.0 183.4 L1043.0 183.3 L1049.0 184.1 L1055.0 185.2 L1061.0 187.1 L1067.0 188.9 L1073.0 190.8 L1079.0 192.8 L1085.0 195.9 L1091.0 197.6 L1097.0 197.2 L1103.0 193.9 L1109.0 189.8 L1115.0 185.8 L1121.0 180.2 L1127.0 175.8 L1133.0 172.0" fill="none" stroke="#e02020" stroke-width="0.9" stroke-dasharray="3 3"/>
<path d="M5.0 172.5 L13.0 169.0 L30.0 168.0 L45.0 165.0 L55.0 172.5 L66.7 179.0 L78.0 185.8 L93.0 181.7 L108.0 185.0 L123.0 185.8 L133.0 197.5 L145.0 206.7 L156.7 211.7 L166.7 210.8 L180.0 201.7 L190.0 208.0 L206.7 221.7 L215.0 221.7 L226.7 205.0 L236.0 200.0 L244.0 203.0 L252.7 209.0 L269.0 210.8 L279.0 206.7 L286.0 213.0 L296.0 221.7 L306.0 228.0 L314.0 223.0 L322.7 219.0 L332.7 226.7 L342.7 231.7 L349.0 236.7 L356.0 218.0 L364.0 196.7 L372.7 176.7 L381.0 176.7 L389.0 188.0 L402.7 195.8 L411.0 183.0 L419.0 171.7 L427.7 161.7 L436.0 154.0 L446.0 153.0 L456.0 145.0 L464.0 139.0 L472.0 137.5 L482.0 139.0 L492.0 141.7 L498.7 148.0 L505.0 165.0 L513.7 177.5 L520.0 190.0 L527.0 203.0 L535.0 201.7 L542.0 206.7 L547.0 216.7 L555.0 226.7 L562.0 236.7 L566.0 243.0 L572.0 241.0 L577.0 235.0 L582.0 223.0 L588.7 218.0 L598.7 213.0 L605.0 225.0 L613.7 235.0 L622.0 231.7 L630.0 215.0 L638.7 198.0 L647.0 188.0 L655.0 183.0 L663.7 177.5 L672.0 176.7 L680.0 171.7 L687.0 169.0 L693.7 176.7 L702.0 182.5 L708.0 180.8 L718.0 181.7 L724.7 178.0 L733.0 179.0 L741.0 188.0 L749.7 201.7 L758.0 210.0 L766.0 214.0 L774.7 215.0 L791.0 214.0 L808.0 215.0 L816.0 210.8 L824.7 206.7 L834.7 210.0 L841.0 212.5 L849.7 217.5 L858.0 220.0 L866.0 220.8 L874.7 222.5 L881.0 222.5 L889.7 217.5 L896.0 210.0 L903.0 200.0 L909.7 191.7 L918.0 189.0 L926.0 188.0 L933.0 185.8 L941.0 181.7 L944.0 179.0 L950.7 173.0 L960.7 169.0 L970.7 171.7 L977.0 175.0 L985.7 181.7 L994.0 185.8 L1002.0 187.5 L1014.0 187.5 L1024.0 185.8 L1034.0 184.0 L1044.0 184.0 L1052.0 187.5 L1060.7 191.7 L1069.0 194.0 L1077.0 200.0 L1084.0 202.5 L1089.0 201.7 L1097.0 193.0 L1104.0 186.7 L1110.7 176.7 L1119.0 167.5 L1127.0 160.8 L1130.7 159.0" fill="none" stroke="#ffffff" stroke-width="1" stroke-dasharray="2 3"/>
</g>
<g shape-rendering="crispEdges" fill="#fff">
<rect x="4" y="69" width="1395" height="1"/><rect x="4" y="69" width="1" height="296"/><rect x="4" y="364" width="1395" height="1"/><rect x="1398" y="69" width="1" height="296"/>
<rect x="5" y="365" width="1" height="3"/>
<rect x="69" y="365" width="1" height="3"/>
<rect x="133" y="365" width="1" height="3"/>
<rect x="197" y="365" width="1" height="3"/>
<rect x="261" y="365" width="1" height="3"/>
<rect x="325" y="365" width="1" height="3"/>
<rect x="389" y="365" width="1" height="3"/>
<rect x="453" y="365" width="1" height="3"/>
<rect x="517" y="365" width="1" height="3"/>
<rect x="581" y="365" width="1" height="3"/>
<rect x="645" y="365" width="1" height="3"/>
<rect x="709" y="365" width="1" height="3"/>
<rect x="773" y="365" width="1" height="3"/>
<rect x="837" y="365" width="1" height="3"/>
<rect x="901" y="365" width="1" height="3"/>
<rect x="965" y="365" width="1" height="3"/>
<rect x="1029" y="365" width="1" height="3"/>
<rect x="1093" y="365" width="1" height="3"/>
<rect x="1399" y="82" width="3" height="1"/>
<rect x="1399" y="115" width="3" height="1"/>
<rect x="1399" y="182" width="3" height="1"/>
<rect x="1399" y="216" width="3" height="1"/>
<rect x="1399" y="250" width="3" height="1"/>
<rect x="1399" y="284" width="3" height="1"/>
<rect x="1399" y="317" width="3" height="1"/>
<rect x="1399" y="351" width="3" height="1"/>
</g>
<path d="M5 358L5 364L11 364Z" fill="#909090"/>
<path d="M1112 70h11l-5.500 5z" fill="#a0a8b0"/>
<g font-family="Liberation Sans,sans-serif" font-size="9.6" fill="#fff">
<text x="9" y="81" textLength="186" lengthAdjust="spacingAndGlyphs">EURUSD,M15&#160;&#160;1.3936 1.3940 1.3933 1.3934</text>
<text x="4" y="377" textLength="50" lengthAdjust="spacingAndGlyphs">25 Oct 2011</text>
<text x="68" y="377" textLength="53.5" lengthAdjust="spacingAndGlyphs">25 Oct 06:30</text>
<text x="132" y="377" textLength="53.5" lengthAdjust="spacingAndGlyphs">25 Oct 08:30</text>
<text x="196" y="377" textLength="53.5" lengthAdjust="spacingAndGlyphs">25 Oct 10:30</text>
<text x="260" y="377" textLength="53.5" lengthAdjust="spacingAndGlyphs">25 Oct 12:30</text>
<text x="324" y="377" textLength="53.5" lengthAdjust="spacingAndGlyphs">25 Oct 14:30</text>
<text x="388" y="377" textLength="53.5" lengthAdjust="spacingAndGlyphs">25 Oct 16:30</text>
<text x="452" y="377" textLength="53.5" lengthAdjust="spacingAndGlyphs">25 Oct 18:30</text>
<text x="516" y="377" textLength="53.5" lengthAdjust="spacingAndGlyphs">25 Oct 20:30</text>
<text x="580" y="377" textLength="53.5" lengthAdjust="spacingAndGlyphs">25 Oct 22:30</text>
<text x="644" y="377" textLength="53.5" lengthAdjust="spacingAndGlyphs">26 Oct 00:30</text>
<text x="708" y="377" textLength="53.5" lengthAdjust="spacingAndGlyphs">26 Oct 02:30</text>
<text x="772" y="377" textLength="53.5" lengthAdjust="spacingAndGlyphs">26 Oct 04:30</text>
<text x="836" y="377" textLength="53.5" lengthAdjust="spacingAndGlyphs">26 Oct 06:30</text>
<text x="900" y="377" textLength="53.5" lengthAdjust="spacingAndGlyphs">26 Oct 08:30</text>
<text x="964" y="377" textLength="53.5" lengthAdjust="spacingAndGlyphs">26 Oct 10:30</text>
<text x="1028" y="377" textLength="53.5" lengthAdjust="spacingAndGlyphs">26 Oct 12:30</text>
<text x="1092" y="377" textLength="53.5" lengthAdjust="spacingAndGlyphs">26 Oct 14:30</text>
<text x="1404" y="86" textLength="27.5" lengthAdjust="spacingAndGlyphs">1.3965</text>
<text x="1404" y="119" textLength="27.5" lengthAdjust="spacingAndGlyphs">1.3950</text>
<text x="1404" y="186" textLength="27.5" lengthAdjust="spacingAndGlyphs">1.3920</text>
<text x="1404" y="220" textLength="27.5" lengthAdjust="spacingAndGlyphs">1.3905</text>
<text x="1404" y="254" textLength="27.5" lengthAdjust="spacingAndGlyphs">1.3890</text>
<text x="1404" y="288" textLength="27.5" lengthAdjust="spacingAndGlyphs">1.3875</text>
<text x="1404" y="321" textLength="27.5" lengthAdjust="spacingAndGlyphs">1.3860</text>
<text x="1404" y="355" textLength="27.5" lengthAdjust="spacingAndGlyphs">1.3845</text>
<rect x="1399" y="146" width="35" height="12" fill="#fff"/>
<text x="1404" y="156" fill="#000" textLength="27.5" lengthAdjust="spacingAndGlyphs">1.3934</text>
</g>
</svg>
<!-- TERMINAL TABLE -->
<div class="a" style="left:0;top:382px;width:1440px;height:2px;background:#fff"></div>
<div class="a" style="left:1px;top:402px;width:13px;height:438px;background:#808080"></div>
<div class="a" style="left:3px;top:388px;font:bold 11px 'Liberation Sans',sans-serif;line-height:10px">×</div>
<div class="a" style="left:1px;top:814px;width:13px;height:25px;overflow:hidden"><div class="a" style="left:1px;top:0;width:24px;height:12px;font-family:'WenQuanYi Zen Hei','Noto Sans CJK SC',sans-serif;font-size:12px;line-height:12px;color:#d8d8d8;transform-origin:0 0;transform:translate(12px,0) rotate(90deg);white-space:nowrap">终端</div></div>
<div class="a" style="left:16px;top:403px;width:1420px;height:416px;background:#fff"></div><div class="a" style="left:1436px;top:403px;width:1px;height:437px;background:#e6e4de"></div><div class="a" style="left:1437px;top:403px;width:1px;height:437px;background:#f4f3f0"></div>
<div class="a" style="left:1438px;top:382px;width:1px;height:459px;background:#fff"></div>
<div class="a" style="left:15px;top:839px;width:1424px;height:1px;background:#fff"></div>
<div class="a" style="left:16px;top:387px;width:1420px;height:16px;background:#d4d0c8;border-top:1px solid #808080;border-bottom:2px solid #404040"></div>
<div class="a" style="left:16px;top:388px;width:1420px;height:1px;background:#fff"></div>
<div class="a" style="left:16px;top:401px;width:1420px;height:1px;background:#808080"></div>
<div class="a hd" style="left:23px;top:390px">定单</div>
<svg class="a" style="left:55px;top:391px" width="10" height="8"><path d="M5 .5L9 7.500H1Z" fill="#e8e6e0" stroke="#fff"/><path d="M5 .5L1 7.500" stroke="#9a978f" fill="none"/></svg>
<div class="a hd" style="left:142px;top:390px;width:207px;text-align:right">时间</div>
<div class="a" style="left:141px;top:388px;width:1px;height:14px;background:#404040"></div><div class="a" style="left:142px;top:388px;width:1px;height:13px;background:#fff"></div><div class="a" style="left:140px;top:389px;width:1px;height:13px;background:#808080"></div>
<div class="a hd" style="left:355px;top:390px;width:91px;text-align:right">类型</div>
<div class="a" style="left:354px;top:388px;width:1px;height:14px;background:#404040"></div><div class="a" style="left:355px;top:388px;width:1px;height:13px;background:#fff"></div><div class="a" style="left:353px;top:389px;width:1px;height:13px;background:#808080"></div>
<div class="a hd" style="left:452px;top:390px;width:71px;text-align:right">手数</div>
<div class="a" style="left:451px;top:388px;width:1px;height:14px;background:#404040"></div><div class="a" style="left:452px;top:388px;width:1px;height:13px;background:#fff"></div><div class="a" style="left:450px;top:389px;width:1px;height:13px;background:#808080"></div>
<div class="a hd" style="left:529px;top:390px;width:91px;text-align:right">商品</div>
<div class="a" style="left:528px;top:388px;width:1px;height:14px;background:#404040"></div><div class="a" style="left:529px;top:388px;width:1px;height:13px;background:#fff"></div><div class="a" style="left:527px;top:389px;width:1px;height:13px;background:#808080"></div>
<div class="a hd" style="left:626px;top:390px;width:91px;text-align:right">价位</div>
<div class="a" style="left:625px;top:388px;width:1px;height:14px;background:#404040"></div><div class="a" style="left:626px;top:388px;width:1px;height:13px;background:#fff"></div><div class="a" style="left:624px;top:389px;width:1px;height:13px;background:#808080"></div>
<div class="a hd" style="left:723px;top:390px;width:91px;text-align:right">止损</div>
<div class="a" style="left:722px;top:388px;width:1px;height:14px;background:#404040"></div><div class="a" style="left:723px;top:388px;width:1px;height:13px;background:#fff"></div><div class="a" style="left:721px;top:389px;width:1px;height:13px;background:#808080"></div>
<div class="a hd" style="left:820px;top:390px;width:91px;text-align:right">获利</div>
<div class="a" style="left:819px;top:388px;width:1px;height:14px;background:#404040"></div><div class="a" style="left:820px;top:388px;width:1px;height:13px;background:#fff"></div><div class="a" style="left:818px;top:389px;width:1px;height:13px;background:#808080"></div>
<div class="a hd" style="left:917px;top:390px;width:207px;text-align:right">时间</div>
<div class="a" style="left:916px;top:388px;width:1px;height:14px;background:#404040"></div><div class="a" style="left:917px;top:388px;width:1px;height:13px;background:#fff"></div><div class="a" style="left:915px;top:389px;width:1px;height:13px;background:#808080"></div>
<div class="a hd" style="left:1130px;top:390px;width:91px;text-align:right">价位</div>
<div class="a" style="left:1129px;top:388px;width:1px;height:14px;background:#404040"></div><div class="a" style="left:1130px;top:388px;width:1px;height:13px;background:#fff"></div><div class="a" style="left:1128px;top:389px;width:1px;height:13px;background:#808080"></div>
<div class="a hd" style="left:1227px;top:390px;width:91px;text-align:right">利息</div>
<div class="a" style="left:1226px;top:388px;width:1px;height:14px;background:#404040"></div><div class="a" style="left:1227px;top:388px;width:1px;height:13px;background:#fff"></div><div class="a" style="left:1225px;top:389px;width:1px;height:13px;background:#808080"></div>
<div class="a hd" style="left:1324px;top:390px;width:107px;text-align:right">获利</div>
<div class="a" style="left:1323px;top:388px;width:1px;height:14px;background:#404040"></div><div class="a" style="left:1324px;top:388px;width:1px;height:13px;background:#fff"></div><div class="a" style="left:1322px;top:389px;width:1px;height:13px;background:#808080"></div>
<div class="a" style="left:1435px;top:388px;width:1px;height:14px;background:#404040"></div><div class="a" style="left:1434px;top:389px;width:1px;height:13px;background:#808080"></div>
<div class="a row" style="top:403px;background:#fff;border-top:1px solid #fff">
<svg class="a" style="left:3px;top:1px" width="16" height="17" viewBox="0 0 16 17"><path d="M.5 1.500q0-1 1-1h6l3.500 3.500v9q0 1-1 1h-8.500q-1 0-1-1z" fill="#fff" stroke="#6a6a6a"/><path d="M7.500.500v3.500h3.500" fill="none" stroke="#6a6a6a"/><path d="M1.500 13.500h8.500" stroke="#b0b0b0"/><circle cx="10.500" cy="12.500" r="3.400" fill="#f0603a" stroke="#b8290c" stroke-width=".8"/><circle cx="9.600" cy="11.500" r="1.100" fill="#fff" opacity=".45"/></svg>
<div class="a m" style="left:26px;top:4px">1109674</div>
<div class="a m" style="left:126px;top:0;width:212px;height:19px;padding:4px 4px 0 0;text-align:right">2011.08.12 22:27</div>
<div class="a m" style="left:339px;top:0;width:96px;height:19px;padding:4px 4px 0 0;text-align:right">sell</div>
<div class="a m" style="left:436px;top:0;width:76px;height:19px;padding:4px 4px 0 0;text-align:right">0.10</div>
<div class="a m" style="left:513px;top:0;width:96px;height:19px;padding:4px 4px 0 0;text-align:right">eurusd</div>
<div class="a m" style="left:610px;top:0;width:96px;height:19px;padding:4px 4px 0 0;text-align:right">1.4243</div>
<div class="a m" style="left:707px;top:0;width:96px;height:19px;padding:4px 4px 0 0;text-align:right">0.0000</div>
<div class="a m" style="left:804px;top:0;width:96px;height:19px;padding:4px 4px 0 0;text-align:right">0.0000</div>
<div class="a m" style="left:901px;top:0;width:212px;height:19px;padding:4px 4px 0 0;text-align:right">2011.08.12 22:51</div>
<div class="a m" style="left:1114px;top:0;width:96px;height:19px;padding:4px 4px 0 0;text-align:right">1.4219</div>
<div class="a m" style="left:1211px;top:0;width:96px;height:19px;padding:4px 4px 0 0;text-align:right">0.00</div>
<div class="a m" style="left:1308px;top:0;width:112px;height:19px;padding:4px 4px 0 0;text-align:right">24.00</div>
</div>
<div class="a row" style="top:423px;background:#ebebeb;border-top:1px solid #cbcbcb">
<svg class="a" style="left:3px;top:1px" width="16" height="17" viewBox="0 0 16 17"><path d="M.5 1.500q0-1 1-1h6l3.500 3.500v9q0 1-1 1h-8.500q-1 0-1-1z" fill="#fff" stroke="#6a6a6a"/><path d="M7.500.500v3.500h3.500" fill="none" stroke="#6a6a6a"/><path d="M1.500 13.500h8.500" stroke="#b0b0b0"/><circle cx="10.500" cy="12.500" r="3.400" fill="#f0603a" stroke="#b8290c" stroke-width=".8"/><circle cx="9.600" cy="11.500" r="1.100" fill="#fff" opacity=".45"/></svg>
<div class="a m" style="left:26px;top:4px">1110363</div>
<div class="a m" style="left:126px;top:0;width:212px;height:19px;padding:4px 4px 0 0;text-align:right">2011.08.15 15:03</div>
<div class="a m" style="left:339px;top:0;width:96px;height:19px;padding:4px 4px 0 0;text-align:right">sell</div>
<div class="a m" style="left:436px;top:0;width:76px;height:19px;padding:4px 4px 0 0;text-align:right">0.10</div>
<div class="a m" style="left:513px;top:0;width:96px;height:19px;padding:4px 4px 0 0;text-align:right">eurusd</div>
<div class="a m" style="left:610px;top:0;width:96px;height:19px;padding:4px 4px 0 0;text-align:right">1.4302</div>
<div class="a m" style="left:707px;top:0;width:96px;height:19px;padding:4px 4px 0 0;text-align:right">0.0000</div>
<div class="a m" style="left:804px;top:0;width:96px;height:19px;padding:4px 4px 0 0;text-align:right">0.0000</div>
<div class="a m" style="left:901px;top:0;width:212px;height:19px;padding:4px 4px 0 0;text-align:right">2011.08.15 15:21</div>
<div class="a m" style="left:1114px;top:0;width:96px;height:19px;padding:4px 4px 0 0;text-align:right">1.4300</div>
<div class="a m" style="left:1211px;top:0;width:96px;height:19px;padding:4px 4px 0 0;text-align:right">0.00</div>
<div class="a m" style="left:1308px;top:0;width:112px;height:19px;padding:4px 4px 0 0;text-align:right">2.00</div>
</div>
<div class="a row sel" style="top:443px;background:#0a246a;border-top:1px solid #0a246a">
<svg class="a" style="left:3px;top:1px" width="16" height="17" viewBox="0 0 16 17"><path d="M.5 1.500q0-1 1-1h6l3.500 3.500v9q0 1-1 1h-8.500q-1 0-1-1z" fill="#fff" stroke="#6a6a6a"/><path d="M7.500.500v3.500h3.500" fill="none" stroke="#6a6a6a"/><path d="M1.500 13.500h8.500" stroke="#b0b0b0"/><circle cx="10.500" cy="12.500" r="3.400" fill="#4aa8f0" stroke="#1668b8" stroke-width=".8"/><circle cx="9.600" cy="11.500" r="1.100" fill="#fff" opacity=".45"/></svg>
<div class="a m" style="left:26px;top:4px">1110996</div>
<div class="a m" style="left:126px;top:0;width:212px;height:19px;padding:4px 4px 0 0;text-align:right">2011.08.15 23:07</div>
<div class="a m" style="left:339px;top:0;width:96px;height:19px;padding:4px 4px 0 0;text-align:right">buy</div>
<div class="a m" style="left:436px;top:0;width:76px;height:19px;padding:4px 4px 0 0;text-align:right">0.02</div>
<div class="a m" style="left:513px;top:0;width:96px;height:19px;padding:4px 4px 0 0;text-align:right">eurusd</div>
<div class="a m" style="left:610px;top:0;width:96px;height:19px;padding:4px 4px 0 0;text-align:right">1.4443</div>
<div class="a m" style="left:707px;top:0;width:96px;height:19px;padding:4px 4px 0 0;text-align:right">0.0000</div>
<div class="a m" style="left:804px;top:0;width:96px;height:19px;padding:4px 4px 0 0;text-align:right">0.0000</div>
<div class="a m" style="left:901px;top:0;width:212px;height:19px;padding:4px 4px 0 0;text-align:right">2011.08.15 23:08</div>
<div class="a m" style="left:1114px;top:0;width:96px;height:19px;padding:4px 4px 0 0;text-align:right">1.4450</div>
<div class="a m" style="left:1211px;top:0;width:96px;height:19px;padding:4px 4px 0 0;text-align:right">0.00</div>
<div class="a m" style="left:1308px;top:0;width:112px;height:19px;padding:4px 4px 0 0;text-align:right">1.40</div>
</div>
<div class="a row" style="top:463px;background:#ebebeb;border-top:1px solid #e4e6ee">
<svg class="a" style="left:3px;top:1px" width="16" height="17" viewBox="0 0 16 17"><path d="M.5 1.500q0-1 1-1h6l3.500 3.500v9q0 1-1 1h-8.500q-1 0-1-1z" fill="#fff" stroke="#6a6a6a"/><path d="M7.500.500v3.500h3.500" fill="none" stroke="#6a6a6a"/><path d="M1.500 13.500h8.500" stroke="#b0b0b0"/><circle cx="10.500" cy="12.500" r="3.400" fill="#4aa8f0" stroke="#1668b8" stroke-width=".8"/><circle cx="9.600" cy="11.500" r="1.100" fill="#fff" opacity=".45"/></svg>
<div class="a m" style="left:26px;top:4px">1111332</div>
<div class="a m" style="left:126px;top:0;width:212px;height:19px;padding:4px 4px 0 0;text-align:right">2011.08.16 09:39</div>
<div class="a m" style="left:339px;top:0;width:96px;height:19px;padding:4px 4px 0 0;text-align:right">buy</div>
<div class="a m" style="left:436px;top:0;width:76px;height:19px;padding:4px 4px 0 0;text-align:right">0.10</div>
<div class="a m" style="left:513px;top:0;width:96px;height:19px;padding:4px 4px 0 0;text-align:right">eurusd</div>
<div class="a m" style="left:610px;top:0;width:96px;height:19px;padding:4px 4px 0 0;text-align:right">1.4445</div>
<div class="a m" style="left:707px;top:0;width:96px;height:19px;padding:4px 4px 0 0;text-align:right">0.0000</div>
<div class="a m" style="left:804px;top:0;width:96px;height:19px;padding:4px 4px 0 0;text-align:right">0.0000</div>
<div class="a m" style="left:901px;top:0;width:212px;height:19px;padding:4px 4px 0 0;text-align:right">2011.08.16 10:11</div>
<div class="a m" style="left:1114px;top:0;width:96px;height:19px;padding:4px 4px 0 0;text-align:right">1.4437</div>
<div class="a m" style="left:1211px;top:0;width:96px;height:19px;padding:4px 4px 0 0;text-align:right">0.00</div>
<div class="a m" style="left:1308px;top:0;width:112px;height:19px;padding:4px 4px 0 0;text-align:right">-8.00</div>
</div>
<div class="a row" style="top:483px;background:#fff;border-top:1px solid #cbcbcb">
<svg class="a" style="left:3px;top:1px" width="16" height="17" viewBox="0 0 16 17"><path d="M.5 1.500q0-1 1-1h6l3.500 3.500v9q0 1-1 1h-8.500q-1 0-1-1z" fill="#fff" stroke="#6a6a6a"/><path d="M7.500.500v3.500h3.500" fill="none" stroke="#6a6a6a"/><path d="M1.500 13.500h8.500" stroke="#b0b0b0"/><circle cx="10.500" cy="12.500" r="3.400" fill="#4aa8f0" stroke="#1668b8" stroke-width=".8"/><circle cx="9.600" cy="11.500" r="1.100" fill="#fff" opacity=".45"/></svg>
<div class="a m" style="left:26px;top:4px">1115517</div>
<div class="a m" style="left:126px;top:0;width:212px;height:19px;padding:4px 4px 0 0;text-align:right">2011.08.19 14:16</div>
<div class="a m" style="left:339px;top:0;width:96px;height:19px;padding:4px 4px 0 0;text-align:right">buy</div>
<div class="a m" style="left:436px;top:0;width:76px;height:19px;padding:4px 4px 0 0;text-align:right">0.10</div>
<div class="a m" style="left:513px;top:0;width:96px;height:19px;padding:4px 4px 0 0;text-align:right">eurusd</div>
<div class="a m" style="left:610px;top:0;width:96px;height:19px;padding:4px 4px 0 0;text-align:right">1.4297</div>
<div class="a m" style="left:707px;top:0;width:96px;height:19px;padding:4px 4px 0 0;text-align:right">0.0000</div>
<div class="a m" style="left:804px;top:0;width:96px;height:19px;padding:4px 4px 0 0;text-align:right">0.0000</div>
<div class="a m" style="left:901px;top:0;width:212px;height:19px;padding:4px 4px 0 0;text-align:right">2011.08.19 14:45</div>
<div class="a m" style="left:1114px;top:0;width:96px;height:19px;padding:4px 4px 0 0;text-align:right">1.4307</div>
<div class="a m" style="left:1211px;top:0;width:96px;height:19px;padding:4px 4px 0 0;text-align:right">0.00</div>
<div class="a m" style="left:1308px;top:0;width:112px;height:19px;padding:4px 4px 0 0;text-align:right">10.00</div>
</div>
<div class="a row" style="top:503px;background:#ebebeb;border-top:1px solid #cbcbcb">
<svg class="a" style="left:3px;top:1px" width="16" height="17" viewBox="0 0 16 17"><path d="M.5 1.500q0-1 1-1h6l3.500 3.500v9q0 1-1 1h-8.500q-1 0-1-1z" fill="#fff" stroke="#6a6a6a"/><path d="M7.500.500v3.500h3.500" fill="none" stroke="#6a6a6a"/><path d="M1.500 13.500h8.500" stroke="#b0b0b0"/><circle cx="10.500" cy="12.500" r="3.400" fill="#f0603a" stroke="#b8290c" stroke-width=".8"/><circle cx="9.600" cy="11.500" r="1.100" fill="#fff" opacity=".45"/></svg>
<div class="a m" style="left:26px;top:4px">1118209</div>
<div class="a m" style="left:126px;top:0;width:212px;height:19px;padding:4px 4px 0 0;text-align:right">2011.08.22 23:16</div>
<div class="a m" style="left:339px;top:0;width:96px;height:19px;padding:4px 4px 0 0;text-align:right">sell</div>
<div class="a m" style="left:436px;top:0;width:76px;height:19px;padding:4px 4px 0 0;text-align:right">0.01</div>
<div class="a m" style="left:513px;top:0;width:96px;height:19px;padding:4px 4px 0 0;text-align:right">eurusd</div>
<div class="a m" style="left:610px;top:0;width:96px;height:19px;padding:4px 4px 0 0;text-align:right">1.4383</div>
<div class="a m" style="left:707px;top:0;width:96px;height:19px;padding:4px 4px 0 0;text-align:right">0.0000</div>
<div class="a m" style="left:804px;top:0;width:96px;height:19px;padding:4px 4px 0 0;text-align:right">0.0000</div>
<div class="a m" style="left:901px;top:0;width:212px;height:19px;padding:4px 4px 0 0;text-align:right">2011.08.22 23:23</div>
<div class="a m" style="left:1114px;top:0;width:96px;height:19px;padding:4px 4px 0 0;text-align:right">1.4372</div>
<div class="a m" style="left:1211px;top:0;width:96px;height:19px;padding:4px 4px 0 0;text-align:right">0.00</div>
<div class="a m" style="left:1308px;top:0;width:112px;height:19px;padding:4px 4px 0 0;text-align:right">1.10</div>
</div>
<div class="a row" style="top:523px;background:#fff;border-top:1px solid #cbcbcb">
<svg class="a" style="left:3px;top:1px" width="16" height="17" viewBox="0 0 16 17"><path d="M.5 1.500q0-1 1-1h6l3.500 3.500v9q0 1-1 1h-8.500q-1 0-1-1z" fill="#fff" stroke="#6a6a6a"/><path d="M7.500.500v3.500h3.500" fill="none" stroke="#6a6a6a"/><path d="M1.500 13.500h8.500" stroke="#b0b0b0"/><circle cx="10.500" cy="12.500" r="3.400" fill="#4aa8f0" stroke="#1668b8" stroke-width=".8"/><circle cx="9.600" cy="11.500" r="1.100" fill="#fff" opacity=".45"/></svg>
<div class="a m" style="left:26px;top:4px">1122117</div>
<div class="a m" style="left:126px;top:0;width:212px;height:19px;padding:4px 4px 0 0;text-align:right">2011.08.25 11:56</div>
<div class="a m" style="left:339px;top:0;width:96px;height:19px;padding:4px 4px 0 0;text-align:right">buy</div>
<div class="a m" style="left:436px;top:0;width:76px;height:19px;padding:4px 4px 0 0;text-align:right">0.10</div>
<div class="a m" style="left:513px;top:0;width:96px;height:19px;padding:4px 4px 0 0;text-align:right">eurusd</div>
<div class="a m" style="left:610px;top:0;width:96px;height:19px;padding:4px 4px 0 0;text-align:right">1.4411</div>
<div class="a m" style="left:707px;top:0;width:96px;height:19px;padding:4px 4px 0 0;text-align:right">0.0000</div>
<div class="a m" style="left:804px;top:0;width:96px;height:19px;padding:4px 4px 0 0;text-align:right">1.4419</div>
<div class="a m" style="left:901px;top:0;width:212px;height:19px;padding:4px 4px 0 0;text-align:right">2011.08.25 12:25</div>
<div class="a m" style="left:1114px;top:0;width:96px;height:19px;padding:4px 4px 0 0;text-align:right">1.4411</div>
<div class="a m" style="left:1211px;top:0;width:96px;height:19px;padding:4px 4px 0 0;text-align:right">0.00</div>
<div class="a m" style="left:1308px;top:0;width:112px;height:19px;padding:4px 4px 0 0;text-align:right">0.00</div>
</div>
<div class="a row" style="top:543px;background:#ebebeb;border-top:1px solid #cbcbcb">
<svg class="a" style="left:3px;top:1px" width="16" height="17" viewBox="0 0 16 17"><path d="M.5 1.500q0-1 1-1h6l3.500 3.500v9q0 1-1 1h-8.500q-1 0-1-1z" fill="#fff" stroke="#6a6a6a"/><path d="M7.500.500v3.500h3.500" fill="none" stroke="#6a6a6a"/><path d="M1.500 13.500h8.500" stroke="#b0b0b0"/><circle cx="10.500" cy="12.500" r="3.400" fill="#4aa8f0" stroke="#1668b8" stroke-width=".8"/><circle cx="9.600" cy="11.500" r="1.100" fill="#fff" opacity=".45"/></svg>
<div class="a m" style="left:26px;top:4px">1137797</div>
<div class="a m" style="left:126px;top:0;width:212px;height:19px;padding:4px 4px 0 0;text-align:right">2011.09.08 15:20</div>
<div class="a m" style="left:339px;top:0;width:96px;height:19px;padding:4px 4px 0 0;text-align:right">buy</div>
<div class="a m" style="left:436px;top:0;width:76px;height:19px;padding:4px 4px 0 0;text-align:right">0.10</div>
<div class="a m" style="left:513px;top:0;width:96px;height:19px;padding:4px 4px 0 0;text-align:right">eurusd</div>
<div class="a m" style="left:610px;top:0;width:96px;height:19px;padding:4px 4px 0 0;text-align:right">1.4078</div>
<div class="a" style="left:707px;top:0;width:94px;height:19px;background:#ff9f9f"></div>
<div class="a m" style="left:707px;top:0;width:96px;height:19px;padding:4px 4px 0 0;text-align:right">1.4063</div>
<div class="a m" style="left:804px;top:0;width:96px;height:19px;padding:4px 4px 0 0;text-align:right">0.0000</div>
<div class="a m" style="left:901px;top:0;width:212px;height:19px;padding:4px 4px 0 0;text-align:right">2011.09.08 15:32</div>
<div class="a m" style="left:1114px;top:0;width:96px;height:19px;padding:4px 4px 0 0;text-align:right">1.4063</div>
<div class="a m" style="left:1211px;top:0;width:96px;height:19px;padding:4px 4px 0 0;text-align:right">0.00</div>
<div class="a m" style="left:1308px;top:0;width:112px;height:19px;padding:4px 4px 0 0;text-align:right">-15.00</div>
</div>
<div class="a row" style="top:563px;background:#fff;border-top:1px solid #cbcbcb">
<svg class="a" style="left:3px;top:1px" width="16" height="17" viewBox="0 0 16 17"><path d="M.5 1.500q0-1 1-1h6l3.500 3.500v9q0 1-1 1h-8.500q-1 0-1-1z" fill="#fff" stroke="#6a6a6a"/><path d="M7.500.500v3.500h3.500" fill="none" stroke="#6a6a6a"/><path d="M1.500 13.500h8.500" stroke="#b0b0b0"/><circle cx="10.500" cy="12.500" r="3.400" fill="#4aa8f0" stroke="#1668b8" stroke-width=".8"/><circle cx="9.600" cy="11.500" r="1.100" fill="#fff" opacity=".45"/></svg>
<div class="a m" style="left:26px;top:4px">1140754</div>
<div class="a m" style="left:126px;top:0;width:212px;height:19px;padding:4px 4px 0 0;text-align:right">2011.09.12 15:58</div>
<div class="a m" style="left:339px;top:0;width:96px;height:19px;padding:4px 4px 0 0;text-align:right">buy</div>
<div class="a m" style="left:436px;top:0;width:76px;height:19px;padding:4px 4px 0 0;text-align:right">0.10</div>
<div class="a m" style="left:513px;top:0;width:96px;height:19px;padding:4px 4px 0 0;text-align:right">eurusd</div>
<div class="a m" style="left:610px;top:0;width:96px;height:19px;padding:4px 4px 0 0;text-align:right">1.3564</div>
<div class="a m" style="left:707px;top:0;width:96px;height:19px;padding:4px 4px 0 0;text-align:right">0.0000</div>
<div class="a m" style="left:804px;top:0;width:96px;height:19px;padding:4px 4px 0 0;text-align:right">0.0000</div>
<div class="a m" style="left:901px;top:0;width:212px;height:19px;padding:4px 4px 0 0;text-align:right">2011.09.12 16:14</div>
<div class="a m" style="left:1114px;top:0;width:96px;height:19px;padding:4px 4px 0 0;text-align:right">1.3590</div>
<div class="a m" style="left:1211px;top:0;width:96px;height:19px;padding:4px 4px 0 0;text-align:right">0.00</div>
<div class="a m" style="left:1308px;top:0;width:112px;height:19px;padding:4px 4px 0 0;text-align:right">26.00</div>
</div>
<div class="a row" style="top:583px;background:#ebebeb;border-top:1px solid #cbcbcb">
<svg class="a" style="left:3px;top:1px" width="16" height="17" viewBox="0 0 16 17"><path d="M.5 1.500q0-1 1-1h6l3.500 3.500v9q0 1-1 1h-8.500q-1 0-1-1z" fill="#fff" stroke="#6a6a6a"/><path d="M7.500.500v3.500h3.500" fill="none" stroke="#6a6a6a"/><path d="M1.500 13.500h8.500" stroke="#b0b0b0"/><circle cx="10.500" cy="12.500" r="3.400" fill="#f0603a" stroke="#b8290c" stroke-width=".8"/><circle cx="9.600" cy="11.500" r="1.100" fill="#fff" opacity=".45"/></svg>
<div class="a m" style="left:26px;top:4px">1141998</div>
<div class="a m" style="left:126px;top:0;width:212px;height:19px;padding:4px 4px 0 0;text-align:right">2011.09.13 13:16</div>
<div class="a m" style="left:339px;top:0;width:96px;height:19px;padding:4px 4px 0 0;text-align:right">sell</div>
<div class="a m" style="left:436px;top:0;width:76px;height:19px;padding:4px 4px 0 0;text-align:right">0.10</div>
<div class="a m" style="left:513px;top:0;width:96px;height:19px;padding:4px 4px 0 0;text-align:right">eurusd</div>
<div class="a m" style="left:610px;top:0;width:96px;height:19px;padding:4px 4px 0 0;text-align:right">1.3676</div>
<div class="a m" style="left:707px;top:0;width:96px;height:19px;padding:4px 4px 0 0;text-align:right">0.0000</div>
<div class="a m" style="left:804px;top:0;width:96px;height:19px;padding:4px 4px 0 0;text-align:right">1.3668</div>
<div class="a m" style="left:901px;top:0;width:212px;height:19px;padding:4px 4px 0 0;text-align:right">2011.09.13 13:30</div>
<div class="a m" style="left:1114px;top:0;width:96px;height:19px;padding:4px 4px 0 0;text-align:right">1.3676</div>
<div class="a m" style="left:1211px;top:0;width:96px;height:19px;padding:4px 4px 0 0;text-align:right">0.00</div>
<div class="a m" style="left:1308px;top:0;width:112px;height:19px;padding:4px 4px 0 0;text-align:right">0.00</div>
</div>
<div class="a row" style="top:603px;background:#fff;border-top:1px solid #cbcbcb">
<svg class="a" style="left:3px;top:1px" width="16" height="17" viewBox="0 0 16 17"><path d="M.5 1.500q0-1 1-1h6l3.500 3.500v9q0 1-1 1h-8.500q-1 0-1-1z" fill="#fff" stroke="#6a6a6a"/><path d="M7.500.500v3.500h3.500" fill="none" stroke="#6a6a6a"/><path d="M1.500 13.500h8.500" stroke="#b0b0b0"/><circle cx="10.500" cy="12.500" r="3.400" fill="#f0603a" stroke="#b8290c" stroke-width=".8"/><circle cx="9.600" cy="11.500" r="1.100" fill="#fff" opacity=".45"/></svg>
<div class="a m" style="left:26px;top:4px">1143066</div>
<div class="a m" style="left:126px;top:0;width:212px;height:19px;padding:4px 4px 0 0;text-align:right">2011.09.13 22:50</div>
<div class="a m" style="left:339px;top:0;width:96px;height:19px;padding:4px 4px 0 0;text-align:right">sell</div>
<div class="a m" style="left:436px;top:0;width:76px;height:19px;padding:4px 4px 0 0;text-align:right">0.10</div>
<div class="a m" style="left:513px;top:0;width:96px;height:19px;padding:4px 4px 0 0;text-align:right">eurusd</div>
<div class="a m" style="left:610px;top:0;width:96px;height:19px;padding:4px 4px 0 0;text-align:right">1.3696</div>
<div class="a m" style="left:707px;top:0;width:96px;height:19px;padding:4px 4px 0 0;text-align:right">0.0000</div>
<div class="a m" style="left:804px;top:0;width:96px;height:19px;padding:4px 4px 0 0;text-align:right">0.0000</div>
<div class="a m" style="left:901px;top:0;width:212px;height:19px;padding:4px 4px 0 0;text-align:right">2011.09.13 23:08</div>
<div class="a m" style="left:1114px;top:0;width:96px;height:19px;padding:4px 4px 0 0;text-align:right">1.3676</div>
<div class="a m" style="left:1211px;top:0;width:96px;height:19px;padding:4px 4px 0 0;text-align:right">0.00</div>
<div class="a m" style="left:1308px;top:0;width:112px;height:19px;padding:4px 4px 0 0;text-align:right">20.00</div>
</div>
<div class="a row" style="top:623px;background:#ebebeb;border-top:1px solid #cbcbcb">
<svg class="a" style="left:3px;top:1px" width="16" height="17" viewBox="0 0 16 17"><path d="M.5 1.500q0-1 1-1h6l3.500 3.500v9q0 1-1 1h-8.500q-1 0-1-1z" fill="#fff" stroke="#6a6a6a"/><path d="M7.500.500v3.500h3.500" fill="none" stroke="#6a6a6a"/><path d="M1.500 13.500h8.500" stroke="#b0b0b0"/><circle cx="10.500" cy="12.500" r="3.400" fill="#f0603a" stroke="#b8290c" stroke-width=".8"/><circle cx="9.600" cy="11.500" r="1.100" fill="#fff" opacity=".45"/></svg>
<div class="a m" style="left:26px;top:4px">1169269</div>
<div class="a m" style="left:126px;top:0;width:212px;height:19px;padding:4px 4px 0 0;text-align:right">2011.10.10 14:55</div>
<div class="a m" style="left:339px;top:0;width:96px;height:19px;padding:4px 4px 0 0;text-align:right">sell</div>
<div class="a m" style="left:436px;top:0;width:76px;height:19px;padding:4px 4px 0 0;text-align:right">0.20</div>
<div class="a m" style="left:513px;top:0;width:96px;height:19px;padding:4px 4px 0 0;text-align:right">eurusd</div>
<div class="a m" style="left:610px;top:0;width:96px;height:19px;padding:4px 4px 0 0;text-align:right">1.3471</div>
<div class="a m" style="left:707px;top:0;width:96px;height:19px;padding:4px 4px 0 0;text-align:right">0.0000</div>
<div class="a m" style="left:804px;top:0;width:96px;height:19px;padding:4px 4px 0 0;text-align:right">0.0000</div>
<div class="a m" style="left:901px;top:0;width:212px;height:19px;padding:4px 4px 0 0;text-align:right">2011.10.10 14:58</div>
<div class="a m" style="left:1114px;top:0;width:96px;height:19px;padding:4px 4px 0 0;text-align:right">1.3468</div>
<div class="a m" style="left:1211px;top:0;width:96px;height:19px;padding:4px 4px 0 0;text-align:right">0.00</div>
<div class="a m" style="left:1308px;top:0;width:112px;height:19px;padding:4px 4px 0 0;text-align:right">6.00</div>
</div>
<div class="a row" style="top:643px;background:#fff;border-top:1px solid #cbcbcb">
<svg class="a" style="left:3px;top:1px" width="16" height="17" viewBox="0 0 16 17"><path d="M.5 1.500q0-1 1-1h6l3.500 3.500v9q0 1-1 1h-8.500q-1 0-1-1z" fill="#fff" stroke="#6a6a6a"/><path d="M7.500.500v3.500h3.500" fill="none" stroke="#6a6a6a"/><path d="M1.500 13.500h8.500" stroke="#b0b0b0"/><circle cx="10.500" cy="12.500" r="3.400" fill="#f0603a" stroke="#b8290c" stroke-width=".8"/><circle cx="9.600" cy="11.500" r="1.100" fill="#fff" opacity=".45"/></svg>
<div class="a m" style="left:26px;top:4px">1172950</div>
<div class="a m" style="left:126px;top:0;width:212px;height:19px;padding:4px 4px 0 0;text-align:right">2011.10.13 13:44</div>
<div class="a m" style="left:339px;top:0;width:96px;height:19px;padding:4px 4px 0 0;text-align:right">sell</div>
<div class="a m" style="left:436px;top:0;width:76px;height:19px;padding:4px 4px 0 0;text-align:right">0.20</div>
<div class="a m" style="left:513px;top:0;width:96px;height:19px;padding:4px 4px 0 0;text-align:right">eurusd</div>
<div class="a m" style="left:610px;top:0;width:96px;height:19px;padding:4px 4px 0 0;text-align:right">1.3793</div>
<div class="a m" style="left:707px;top:0;width:96px;height:19px;padding:4px 4px 0 0;text-align:right">0.0000</div>
<div class="a m" style="left:804px;top:0;width:96px;height:19px;padding:4px 4px 0 0;text-align:right">0.0000</div>
<div class="a m" style="left:901px;top:0;width:212px;height:19px;padding:4px 4px 0 0;text-align:right">2011.10.13 14:00</div>
<div class="a m" style="left:1114px;top:0;width:96px;height:19px;padding:4px 4px 0 0;text-align:right">1.3789</div>
<div class="a m" style="left:1211px;top:0;width:96px;height:19px;padding:4px 4px 0 0;text-align:right">0.00</div>
<div class="a m" style="left:1308px;top:0;width:112px;height:19px;padding:4px 4px 0 0;text-align:right">8.00</div>
</div>
<div class="a row" style="top:663px;background:#ebebeb;border-top:1px solid #cbcbcb">
<svg class="a" style="left:3px;top:1px" width="16" height="17" viewBox="0 0 16 17"><path d="M.5 1.500q0-1 1-1h6l3.500 3.500v9q0 1-1 1h-8.500q-1 0-1-1z" fill="#fff" stroke="#6a6a6a"/><path d="M7.500.500v3.500h3.500" fill="none" stroke="#6a6a6a"/><path d="M1.500 13.500h8.500" stroke="#b0b0b0"/><circle cx="10.500" cy="12.500" r="3.400" fill="#f0603a" stroke="#b8290c" stroke-width=".8"/><circle cx="9.600" cy="11.500" r="1.100" fill="#fff" opacity=".45"/></svg>
<div class="a m" style="left:26px;top:4px">1174567</div>
<div class="a m" style="left:126px;top:0;width:212px;height:19px;padding:4px 4px 0 0;text-align:right">2011.10.14 20:45</div>
<div class="a m" style="left:339px;top:0;width:96px;height:19px;padding:4px 4px 0 0;text-align:right">sell</div>
<div class="a m" style="left:436px;top:0;width:76px;height:19px;padding:4px 4px 0 0;text-align:right">0.20</div>
<div class="a m" style="left:513px;top:0;width:96px;height:19px;padding:4px 4px 0 0;text-align:right">eurusd</div>
<div class="a m" style="left:610px;top:0;width:96px;height:19px;padding:4px 4px 0 0;text-align:right">1.3802</div>
<div class="a m" style="left:707px;top:0;width:96px;height:19px;padding:4px 4px 0 0;text-align:right">0.0000</div>
<div class="a m" style="left:804px;top:0;width:96px;height:19px;padding:4px 4px 0 0;text-align:right">0.0000</div>
<div class="a m" style="left:901px;top:0;width:212px;height:19px;padding:4px 4px 0 0;text-align:right">2011.10.14 20:49</div>
<div class="a m" style="left:1114px;top:0;width:96px;height:19px;padding:4px 4px 0 0;text-align:right">1.3800</div>
<div class="a m" style="left:1211px;top:0;width:96px;height:19px;padding:4px 4px 0 0;text-align:right">0.00</div>
<div class="a m" style="left:1308px;top:0;width:112px;height:19px;padding:4px 4px 0 0;text-align:right">4.00</div>
</div>
<div class="a row" style="top:683px;background:#fff;border-top:1px solid #cbcbcb">
<svg class="a" style="left:3px;top:1px" width="16" height="17" viewBox="0 0 16 17"><path d="M.5 1.500q0-1 1-1h6l3.500 3.500v9q0 1-1 1h-8.500q-1 0-1-1z" fill="#fff" stroke="#6a6a6a"/><path d="M7.500.500v3.500h3.500" fill="none" stroke="#6a6a6a"/><path d="M1.500 13.500h8.500" stroke="#b0b0b0"/><circle cx="10.500" cy="12.500" r="3.400" fill="#f0603a" stroke="#b8290c" stroke-width=".8"/><circle cx="9.600" cy="11.500" r="1.100" fill="#fff" opacity=".45"/></svg>
<div class="a m" style="left:26px;top:4px">1175605</div>
<div class="a m" style="left:126px;top:0;width:212px;height:19px;padding:4px 4px 0 0;text-align:right">2011.10.17 16:38</div>
<div class="a m" style="left:339px;top:0;width:96px;height:19px;padding:4px 4px 0 0;text-align:right">sell</div>
<div class="a m" style="left:436px;top:0;width:76px;height:19px;padding:4px 4px 0 0;text-align:right">0.20</div>
<div class="a m" style="left:513px;top:0;width:96px;height:19px;padding:4px 4px 0 0;text-align:right">eurusd</div>
<div class="a m" style="left:610px;top:0;width:96px;height:19px;padding:4px 4px 0 0;text-align:right">1.3893</div>
<div class="a m" style="left:707px;top:0;width:96px;height:19px;padding:4px 4px 0 0;text-align:right">1.3919</div>
<div class="a m" style="left:804px;top:0;width:96px;height:19px;padding:4px 4px 0 0;text-align:right">0.0000</div>
<div class="a m" style="left:901px;top:0;width:212px;height:19px;padding:4px 4px 0 0;text-align:right">2011.10.17 16:51</div>
<div class="a m" style="left:1114px;top:0;width:96px;height:19px;padding:4px 4px 0 0;text-align:right">1.3890</div>
<div class="a m" style="left:1211px;top:0;width:96px;height:19px;padding:4px 4px 0 0;text-align:right">0.00</div>
<div class="a m" style="left:1308px;top:0;width:112px;height:19px;padding:4px 4px 0 0;text-align:right">6.00</div>
</div>
<div class="a row" style="top:703px;background:#ebebeb;border-top:1px solid #cbcbcb">
<svg class="a" style="left:3px;top:1px" width="16" height="17" viewBox="0 0 16 17"><path d="M.5 1.500q0-1 1-1h6l3.500 3.500v9q0 1-1 1h-8.500q-1 0-1-1z" fill="#fff" stroke="#6a6a6a"/><path d="M7.500.500v3.500h3.500" fill="none" stroke="#6a6a6a"/><path d="M1.500 13.500h8.500" stroke="#b0b0b0"/><circle cx="10.500" cy="12.500" r="3.400" fill="#f0603a" stroke="#b8290c" stroke-width=".8"/><circle cx="9.600" cy="11.500" r="1.100" fill="#fff" opacity=".45"/></svg>
<div class="a m" style="left:26px;top:4px">1175636</div>
<div class="a m" style="left:126px;top:0;width:212px;height:19px;padding:4px 4px 0 0;text-align:right">2011.10.17 17:01</div>
<div class="a m" style="left:339px;top:0;width:96px;height:19px;padding:4px 4px 0 0;text-align:right">sell</div>
<div class="a m" style="left:436px;top:0;width:76px;height:19px;padding:4px 4px 0 0;text-align:right">0.20</div>
<div class="a m" style="left:513px;top:0;width:96px;height:19px;padding:4px 4px 0 0;text-align:right">eurusd</div>
<div class="a m" style="left:610px;top:0;width:96px;height:19px;padding:4px 4px 0 0;text-align:right">1.3899</div>
<div class="a m" style="left:707px;top:0;width:96px;height:19px;padding:4px 4px 0 0;text-align:right">1.3919</div>
<div class="a m" style="left:804px;top:0;width:96px;height:19px;padding:4px 4px 0 0;text-align:right">1.3871</div>
<div class="a m" style="left:901px;top:0;width:212px;height:19px;padding:4px 4px 0 0;text-align:right">2011.10.17 17:23</div>
<div class="a m" style="left:1114px;top:0;width:96px;height:19px;padding:4px 4px 0 0;text-align:right">1.3883</div>
<div class="a m" style="left:1211px;top:0;width:96px;height:19px;padding:4px 4px 0 0;text-align:right">0.00</div>
<div class="a m" style="left:1308px;top:0;width:112px;height:19px;padding:4px 4px 0 0;text-align:right">32.00</div>
</div>
<div class="a row" style="top:723px;background:#fff;border-top:1px solid #cbcbcb">
<svg class="a" style="left:3px;top:1px" width="16" height="17" viewBox="0 0 16 17"><path d="M.5 1.500q0-1 1-1h6l3.500 3.500v9q0 1-1 1h-8.500q-1 0-1-1z" fill="#fff" stroke="#6a6a6a"/><path d="M7.500.500v3.500h3.500" fill="none" stroke="#6a6a6a"/><path d="M1.500 13.500h8.500" stroke="#b0b0b0"/><circle cx="10.500" cy="12.500" r="3.400" fill="#f0603a" stroke="#b8290c" stroke-width=".8"/><circle cx="9.600" cy="11.500" r="1.100" fill="#fff" opacity=".45"/></svg>
<div class="a m" style="left:26px;top:4px">1177892</div>
<div class="a m" style="left:126px;top:0;width:212px;height:19px;padding:4px 4px 0 0;text-align:right">2011.10.19 10:00</div>
<div class="a m" style="left:339px;top:0;width:96px;height:19px;padding:4px 4px 0 0;text-align:right">sell</div>
<div class="a m" style="left:436px;top:0;width:76px;height:19px;padding:4px 4px 0 0;text-align:right">0.20</div>
<div class="a m" style="left:513px;top:0;width:96px;height:19px;padding:4px 4px 0 0;text-align:right">eurusd</div>
<div class="a m" style="left:610px;top:0;width:96px;height:19px;padding:4px 4px 0 0;text-align:right">1.3766</div>
<div class="a m" style="left:707px;top:0;width:96px;height:19px;padding:4px 4px 0 0;text-align:right">0.0000</div>
<div class="a m" style="left:804px;top:0;width:96px;height:19px;padding:4px 4px 0 0;text-align:right">1.3754</div>
<div class="a m" style="left:901px;top:0;width:212px;height:19px;padding:4px 4px 0 0;text-align:right">2011.10.19 10:33</div>
<div class="a m" style="left:1114px;top:0;width:96px;height:19px;padding:4px 4px 0 0;text-align:right">1.3766</div>
<div class="a m" style="left:1211px;top:0;width:96px;height:19px;padding:4px 4px 0 0;text-align:right">0.00</div>
<div class="a m" style="left:1308px;top:0;width:112px;height:19px;padding:4px 4px 0 0;text-align:right">0.00</div>
</div>
<div class="a row" style="top:743px;background:#ebebeb;border-top:1px solid #cbcbcb">
<svg class="a" style="left:3px;top:1px" width="16" height="17" viewBox="0 0 16 17"><path d="M.5 1.500q0-1 1-1h6l3.500 3.500v9q0 1-1 1h-8.500q-1 0-1-1z" fill="#fff" stroke="#6a6a6a"/><path d="M7.500.500v3.500h3.500" fill="none" stroke="#6a6a6a"/><path d="M1.500 13.500h8.500" stroke="#b0b0b0"/><circle cx="10.500" cy="12.500" r="3.400" fill="#4aa8f0" stroke="#1668b8" stroke-width=".8"/><circle cx="9.600" cy="11.500" r="1.100" fill="#fff" opacity=".45"/></svg>
<div class="a m" style="left:26px;top:4px">1179683</div>
<div class="a m" style="left:126px;top:0;width:212px;height:19px;padding:4px 4px 0 0;text-align:right">2011.10.20 14:46</div>
<div class="a m" style="left:339px;top:0;width:96px;height:19px;padding:4px 4px 0 0;text-align:right">buy</div>
<div class="a m" style="left:436px;top:0;width:76px;height:19px;padding:4px 4px 0 0;text-align:right">0.20</div>
<div class="a m" style="left:513px;top:0;width:96px;height:19px;padding:4px 4px 0 0;text-align:right">eurusd</div>
<div class="a m" style="left:610px;top:0;width:96px;height:19px;padding:4px 4px 0 0;text-align:right">1.3710</div>
<div class="a m" style="left:707px;top:0;width:96px;height:19px;padding:4px 4px 0 0;text-align:right">0.0000</div>
<div class="a m" style="left:804px;top:0;width:96px;height:19px;padding:4px 4px 0 0;text-align:right">0.0000</div>
<div class="a m" style="left:901px;top:0;width:212px;height:19px;padding:4px 4px 0 0;text-align:right">2011.10.20 14:46</div>
<div class="a m" style="left:1114px;top:0;width:96px;height:19px;padding:4px 4px 0 0;text-align:right">1.3712</div>
<div class="a m" style="left:1211px;top:0;width:96px;height:19px;padding:4px 4px 0 0;text-align:right">0.00</div>
<div class="a m" style="left:1308px;top:0;width:112px;height:19px;padding:4px 4px 0 0;text-align:right">4.00</div>
</div>
<div class="a row" style="top:763px;background:#fff;border-top:1px solid #cbcbcb">
<svg class="a" style="left:3px;top:1px" width="16" height="17" viewBox="0 0 16 17"><path d="M.5 1.500q0-1 1-1h6l3.500 3.500v9q0 1-1 1h-8.500q-1 0-1-1z" fill="#fff" stroke="#6a6a6a"/><path d="M7.500.500v3.500h3.500" fill="none" stroke="#6a6a6a"/><path d="M1.500 13.500h8.500" stroke="#b0b0b0"/><circle cx="10.500" cy="12.500" r="3.400" fill="#f0603a" stroke="#b8290c" stroke-width=".8"/><circle cx="9.600" cy="11.500" r="1.100" fill="#fff" opacity=".45"/></svg>
<div class="a m" style="left:26px;top:4px">1181785</div>
<div class="a m" style="left:126px;top:0;width:212px;height:19px;padding:4px 4px 0 0;text-align:right">2011.10.21 22:49</div>
<div class="a m" style="left:339px;top:0;width:96px;height:19px;padding:4px 4px 0 0;text-align:right">sell</div>
<div class="a m" style="left:436px;top:0;width:76px;height:19px;padding:4px 4px 0 0;text-align:right">0.20</div>
<div class="a m" style="left:513px;top:0;width:96px;height:19px;padding:4px 4px 0 0;text-align:right">eurusd</div>
<div class="a m" style="left:610px;top:0;width:96px;height:19px;padding:4px 4px 0 0;text-align:right">1.3871</div>
<div class="a m" style="left:707px;top:0;width:96px;height:19px;padding:4px 4px 0 0;text-align:right">0.0000</div>
<div class="a" style="left:804px;top:0;width:94px;height:19px;background:#5aea5a"></div>
<div class="a m" style="left:804px;top:0;width:96px;height:19px;padding:4px 4px 0 0;text-align:right">1.3868</div>
<div class="a m" style="left:901px;top:0;width:212px;height:19px;padding:4px 4px 0 0;text-align:right">2011.10.22 00:10</div>
<div class="a m" style="left:1114px;top:0;width:96px;height:19px;padding:4px 4px 0 0;text-align:right">1.3868</div>
<div class="a m" style="left:1211px;top:0;width:96px;height:19px;padding:4px 4px 0 0;text-align:right">0.00</div>
<div class="a m" style="left:1308px;top:0;width:112px;height:19px;padding:4px 4px 0 0;text-align:right">6.00</div>
</div>
<div class="a" style="left:16px;top:442px;width:1420px;height:1px;background:#fff"></div>
<div class="a" style="left:140px;top:403px;width:1px;height:380px;background:rgba(150,150,150,.45)"></div>
<div class="a" style="left:353px;top:403px;width:1px;height:380px;background:rgba(150,150,150,.45)"></div>
<div class="a" style="left:450px;top:403px;width:1px;height:380px;background:rgba(150,150,150,.45)"></div>
<div class="a" style="left:527px;top:403px;width:1px;height:380px;background:rgba(150,150,150,.45)"></div>
<div class="a" style="left:624px;top:403px;width:1px;height:380px;background:rgba(150,150,150,.45)"></div>
<div class="a" style="left:721px;top:403px;width:1px;height:380px;background:rgba(150,150,150,.45)"></div>
<div class="a" style="left:818px;top:403px;width:1px;height:380px;background:rgba(150,150,150,.45)"></div>
<div class="a" style="left:915px;top:403px;width:1px;height:380px;background:rgba(150,150,150,.45)"></div>
<div class="a" style="left:1128px;top:403px;width:1px;height:380px;background:rgba(150,150,150,.45)"></div>
<div class="a" style="left:1225px;top:403px;width:1px;height:380px;background:rgba(150,150,150,.45)"></div>
<div class="a" style="left:1322px;top:403px;width:1px;height:380px;background:rgba(150,150,150,.45)"></div>
<div class="a" style="left:140px;top:443px;width:1px;height:20px;background:#c8d0e8"></div>
<div class="a" style="left:353px;top:443px;width:1px;height:20px;background:#c8d0e8"></div>
<div class="a" style="left:450px;top:443px;width:1px;height:20px;background:#c8d0e8"></div>
<div class="a" style="left:527px;top:443px;width:1px;height:20px;background:#c8d0e8"></div>
<div class="a" style="left:624px;top:443px;width:1px;height:20px;background:#c8d0e8"></div>
<div class="a" style="left:721px;top:443px;width:1px;height:20px;background:#c8d0e8"></div>
<div class="a" style="left:818px;top:443px;width:1px;height:20px;background:#c8d0e8"></div>
<div class="a" style="left:915px;top:443px;width:1px;height:20px;background:#c8d0e8"></div>
<div class="a" style="left:1128px;top:443px;width:1px;height:20px;background:#c8d0e8"></div>
<div class="a" style="left:1225px;top:443px;width:1px;height:20px;background:#c8d0e8"></div>
<div class="a" style="left:1322px;top:443px;width:1px;height:20px;background:#c8d0e8"></div>
<div class="a" style="left:16px;top:783px;width:1420px;height:20px;background:#c8c8c8"></div>
<svg class="a" style="left:22px;top:788px" width="10" height="10"><circle cx="5" cy="5" r="3.600" fill="#d8d8d8" stroke="#8a8a8a"/><path d="M3 7l4-4" stroke="#aaa"/></svg>
<div class="a sm k" style="left:42px;top:787px">盈/亏:</div>
<div class="a sm " style="left:87px;top:787px">127.50</div>
<div class="a sm k" style="left:143px;top:787px">信用额:</div>
<div class="a sm " style="left:192px;top:787px">0.00</div>
<div class="a sm k" style="left:234px;top:787px">存款:</div>
<div class="a sm " style="left:272px;top:787px">0.00</div>
<div class="a sm k" style="left:314px;top:787px">取款:</div>
<div class="a sm " style="left:352px;top:787px">0.00</div>
<div class="a sm" style="left:1300px;top:787px;width:132px;text-align:right">127.50</div>
<div class="a" style="left:16px;top:819px;width:1422px;height:1px;background:#000"></div>
<div class="a" style="left:63px;top:819px;width:67px;height:18px;background:#fff;border:1px solid #000;border-top:0"></div>
<div class="a tab" style="left:27px;top:822px">交易</div>
<div class="a tab" style="left:71px;top:822px">账户历史</div>
<div class="a tab" style="left:139px;top:822px">警报</div>
<div class="a tab" style="left:183px;top:822px">邮箱</div>
<div class="a tab" style="left:228px;top:822px">日志</div>
<div class="a" style="left:174px;top:823px;width:1px;height:11px;background:#404040"></div>
<div class="a" style="left:218px;top:823px;width:1px;height:11px;background:#404040"></div>
<div class="a" style="left:262px;top:823px;width:1px;height:11px;background:#404040"></div>
<!-- STATUS BAR -->
<div class="a" style="left:0;top:842px;width:1440px;height:1px;background:#808080"></div>
<div class="a" style="left:0;top:843px;width:1440px;height:1px;background:#fff"></div>
<div class="a st" style="left:3px;top:849px">寻求帮助, 请按<span class="sl">F1</span>键</div>
<div class="a vs" style="left:568px"></div><div class="a sl2" style="left:575px;top:850px">Default</div>
<div class="a vs" style="left:732px"></div><div class="a vs" style="left:848px"></div><div class="a vs" style="left:935px"></div><div class="a vs" style="left:1020px"></div><div class="a vs" style="left:1106px"></div><div class="a vs" style="left:1192px"></div><div class="a vs" style="left:1278px"></div>
<svg class="a" style="left:1284px;top:848px" width="24" height="13" viewBox="0 0 24 13" shape-rendering="crispEdges"><g fill="#0f5a8c"><rect x="0" y="1" width="2" height="12"/><rect x="3" y="1" width="2" height="12"/><rect x="6" y="1" width="2" height="12"/><rect x="9" y="1" width="2" height="12"/><rect x="12" y="1" width="2" height="12"/><rect x="15" y="1" width="2" height="12"/><rect x="18" y="1" width="2" height="12"/><rect x="21" y="1" width="2" height="12"/></g><g fill="#86a01e"><rect x="0" y="1" width="2" height="10"/><rect x="3" y="1" width="2" height="9"/><rect x="6" y="1" width="2" height="8"/><rect x="9" y="1" width="2" height="6"/><rect x="12" y="1" width="2" height="5"/><rect x="15" y="1" width="2" height="4"/><rect x="18" y="1" width="2" height="2"/><rect x="21" y="1" width="2" height="1"/></g></svg>
<div class="a sl2" style="left:1340px;top:850px">1592/2 kb</div>
<!-- TASKBAR -->
<div class="a" style="left:0;top:865px;width:1440px;height:1px;background:#fff"></div>
<div class="a tbn" style="left:2px;top:868px;width:47px;height:22px">
 <svg class="a" style="left:3px;top:2px" width="16" height="16" viewBox="0 0 16 16"><path d="M1.500 3q2.500-2 5.500-.5l-1.200 5q-3-1.500-5.600.5z" fill="#e8542a"/><path d="M8 2.800q2.800 1.600 5.800-.3l-1.300 5q-2.800 1.800-5.700.3z" fill="#6cc23a"/><path d="M0 9q2.600-2 5.500-.5l-1.200 5q-3-1.500-5.600.5z" fill="#3a78d8" transform="translate(1.200 0)"/><path d="M6.500 9q2.800 1.600 5.800-.3l-1.300 5q-2.800 1.800-5.700.3z" fill="#f2c21e"/></svg>
 <div class="a" style="left:19px;top:2px;font:bold 12px 'Noto Sans CJK SC','WenQuanYi Zen Hei',sans-serif;line-height:14px;letter-spacing:-0.5px;white-space:pre">开始</div>
</div>
<svg class="a" style="left:56px;top:874px" width="17" height="17" viewBox="0 0 17 17"><rect x="1" y="1.500" width="13.500" height="13.500" rx="3" transform="rotate(-8 8 8)" fill="#3b8fe0" stroke="#cfe6fb" stroke-width="1.400"/><path d="M5 6.500h6l-3 2.500h3M5 6.500v5.500h6" stroke="#fff" stroke-width="1.300" fill="none"/><path d="M12 4l3-1" stroke="#e8782a" stroke-width="1.500"/></svg>
<div class="a tab" style="left:83px;top:876px;font-size:12px">工具</div><div class="a dd" style="left:114px;top:881px;border-width:4px 3.500px 0 3.500px"></div>
<div class="a tab" style="left:131px;top:876px;font-size:12px">网络</div><div class="a dd" style="left:161px;top:881px;border-width:4px 3.500px 0 3.500px"></div>
<svg class="a" style="left:174px;top:874px" width="16" height="17" viewBox="0 0 16 17"><circle cx="8" cy="8.500" r="7.300" fill="#2f86d0" stroke="#e8f2fb" stroke-width="1"/><path d="M11.500 4.500q-5-2-6.500 1q-.5 2 3 3.300q3 1.200 2 2.800q-1.500 2-5.500.4" fill="none" stroke="#fff" stroke-width="2.200" stroke-linecap="round"/></svg>
<div class="a" style="left:196px;top:873px;font:bold 13px 'Liberation Sans',sans-serif;line-height:13px">»</div>
<div class="a tbn" style="left:214px;top:868px;width:159px;height:22px">
 <svg class="a" style="left:3px;top:2px" width="17" height="17" viewBox="0 0 17 17"><rect width="17" height="17" fill="#1b8ed8"/><path d="M2 8.500q6.500-7 13 0q-6.500 7-13 0z" fill="#fff"/><circle cx="8.500" cy="8.500" r="2.600" fill="#1b8ed8"/></svg>
 <div class="a m m12" style="left:22px;top:4px">782031: Best Direct...</div>
</div>
<div class="a tbn on" style="left:377px;top:868px;width:159px;height:22px">
 <svg class="a" style="left:5px;top:3px" width="16" height="16" viewBox="0 0 16 16"><defs><radialGradient id="g2" cx="0.38" cy="0.3" r="0.75"><stop offset="0" stop-color="#cfe9ff"/><stop offset="0.4" stop-color="#3f86c8"/><stop offset="1" stop-color="#0c2a5a"/></radialGradient></defs><circle cx="8" cy="8" r="7.300" fill="url(#g2)"/></svg>
 <div class="a m m12" style="left:24px;top:5px">320119: MetaTrader ...</div>
</div>
<div class="a tbn" style="left:540px;top:868px;width:159px;height:22px">
 <svg class="a" style="left:4px;top:3px" width="16" height="16" viewBox="0 0 16 16"><path d="M1.500 5l3.500-3.500l3 3l3-3l3.500 3.500l-3 3l3 3l-3.500 3.500l-3-3l-3 3l-3.500-3.500l3-3z" fill="#eef4fa" stroke="#5a86b4" stroke-width="1.100"/><path d="M5 5l6 6M11 5l-6 6" stroke="#5a86b4" stroke-width="1"/></svg>
 <div class="a m m12" style="left:23px;top:4px">320153: MetaTrader ...</div>
</div>
<div class="a tbn" style="left:703px;top:868px;width:159px;height:22px">
 <svg class="a" style="left:4px;top:2px" width="17" height="17" viewBox="0 0 17 17"><path d="M13.500 11.500q-2 3.500-6 3q-4.500-1-4.500-5.500q.5-5 5.500-5q5 .5 5 5.500h-8" fill="none" stroke="#2a7fd8" stroke-width="2.400"/><path d="M1.500 14q-1.500-3 3.500-8q5.500-5 10-4.500q-4 0-8.500 4.500q-4 4-5 8z" fill="#f0b428" stroke="#e0a010" stroke-width=".6"/></svg>
 <div class="a m m12" style="left:24px;top:4px"><span class="cj">主 论 坛</span> - <span class="cj">外汇论坛</span>...</div>
</div>
<div class="a tbn" style="left:866px;top:868px;width:159px;height:22px">
 <svg class="a" style="left:4px;top:1px" width="17" height="19" viewBox="0 0 17 19"><path d="M3.500 5.500h11v8l-4 4h-7z" fill="#fbd23a" stroke="#c99a10"/><path d="M10.500 17.500v-4h4" fill="#fde88a" stroke="#c99a10"/><circle cx="4" cy="3.500" r="2.600" fill="#d8402a" stroke="#8a1a0c" stroke-width=".7"/><path d="M5.500 5.500l2.500 3" stroke="#777" stroke-width="1"/></svg>
 <div class="a m m12" style="left:23px;top:4px"><span class="cj">汇市风云</span></div>
</div>
<svg class="a" style="left:1298px;top:876px" width="17" height="14" viewBox="0 0 17 14"><path d="M4 3.500q1-2 2.500-.5t2.500 0t2.500 0" fill="none" stroke="#000" stroke-width="1.100"/><rect x=".8" y="4.800" width="15.400" height="8.400" rx="1.500" fill="#fff" stroke="#000" stroke-width="1.300"/><path d="M3 7.500h11M3 9.500h11" stroke="#000" stroke-dasharray="1 1"/><path d="M4 11.500h9" stroke="#000"/></svg>
<div class="a" style="left:1318px;top:870px;width:2px;height:26px;border-left:1px solid #808080;border-right:1px solid #fff"></div>
<div class="a" style="left:1323px;top:868px;width:115px;height:29px;border:1px solid;border-color:#808080 #fff #fff #808080"></div>
<div class="a" style="left:1327px;top:876px;font:bold 13px 'Liberation Sans',sans-serif;line-height:13px">«</div>
<svg class="a" style="left:1341px;top:875px" width="17" height="17" viewBox="0 0 17 17"><ellipse cx="8" cy="6" rx="4.600" ry="5.500" fill="#111"/><ellipse cx="8" cy="12" rx="5" ry="4.300" fill="#111"/><ellipse cx="8" cy="12.500" rx="3.300" ry="3.300" fill="#fff"/><path d="M2 9.500q6 3 12 0l.3 2.500q-6.300 2.500-12.600 0z" fill="#e01818"/><ellipse cx="6.500" cy="4.800" rx="1" ry="1.500" fill="#fff"/><ellipse cx="9.500" cy="4.800" rx="1" ry="1.500" fill="#fff"/><ellipse cx="8" cy="7.500" rx="2.400" ry="1" fill="#f0a020"/><ellipse cx="5" cy="16" rx="2.400" ry="1" fill="#f0a020"/><ellipse cx="11" cy="16" rx="2.400" ry="1" fill="#f0a020"/><circle cx="12.500" cy="12.500" r="3.800" fill="#f5a81c" stroke="#d88a08" stroke-width=".6"/><path d="M10.500 11.500h4M10.500 13.500h4" stroke="#fff" stroke-width="1.100"/></svg>
<svg class="a" style="left:1359px;top:875px" width="17" height="17" viewBox="0 0 17 17"><ellipse cx="8" cy="6" rx="4.600" ry="5.500" fill="#111"/><ellipse cx="8" cy="12" rx="5" ry="4.300" fill="#111"/><ellipse cx="8" cy="12.500" rx="3.300" ry="3.300" fill="#fff"/><path d="M2 9.500q6 3 12 0l.3 2.500q-6.300 2.500-12.600 0z" fill="#e01818"/><ellipse cx="6.500" cy="4.800" rx="1" ry="1.500" fill="#fff"/><ellipse cx="9.500" cy="4.800" rx="1" ry="1.500" fill="#fff"/><ellipse cx="8" cy="7.500" rx="2.400" ry="1" fill="#f0a020"/><ellipse cx="5" cy="16" rx="2.400" ry="1" fill="#f0a020"/><ellipse cx="11" cy="16" rx="2.400" ry="1" fill="#f0a020"/><path d="M1 10l1.500 4M15 10l-1.500 4" stroke="#111" stroke-width="1.600" stroke-linecap="round"/></svg>
<svg class="a" style="left:1377px;top:875px" width="15" height="15" viewBox="0 0 15 15"><rect x="6" y=".5" width="8" height="7" rx="1" fill="#8cc4f4" stroke="#5a96d8"/><rect x="8" y="8" width="4" height="2" fill="#9ab8e0"/><rect x=".8" y="4.500" width="8" height="7" rx="1" fill="#a8d4f8" stroke="#5a96d8"/><rect x="2.500" y="12" width="5" height="2" fill="#9ab8e0"/></svg>
<div class="a m m12" style="left:1400px;top:877px">15:50</div>

</body></html>
